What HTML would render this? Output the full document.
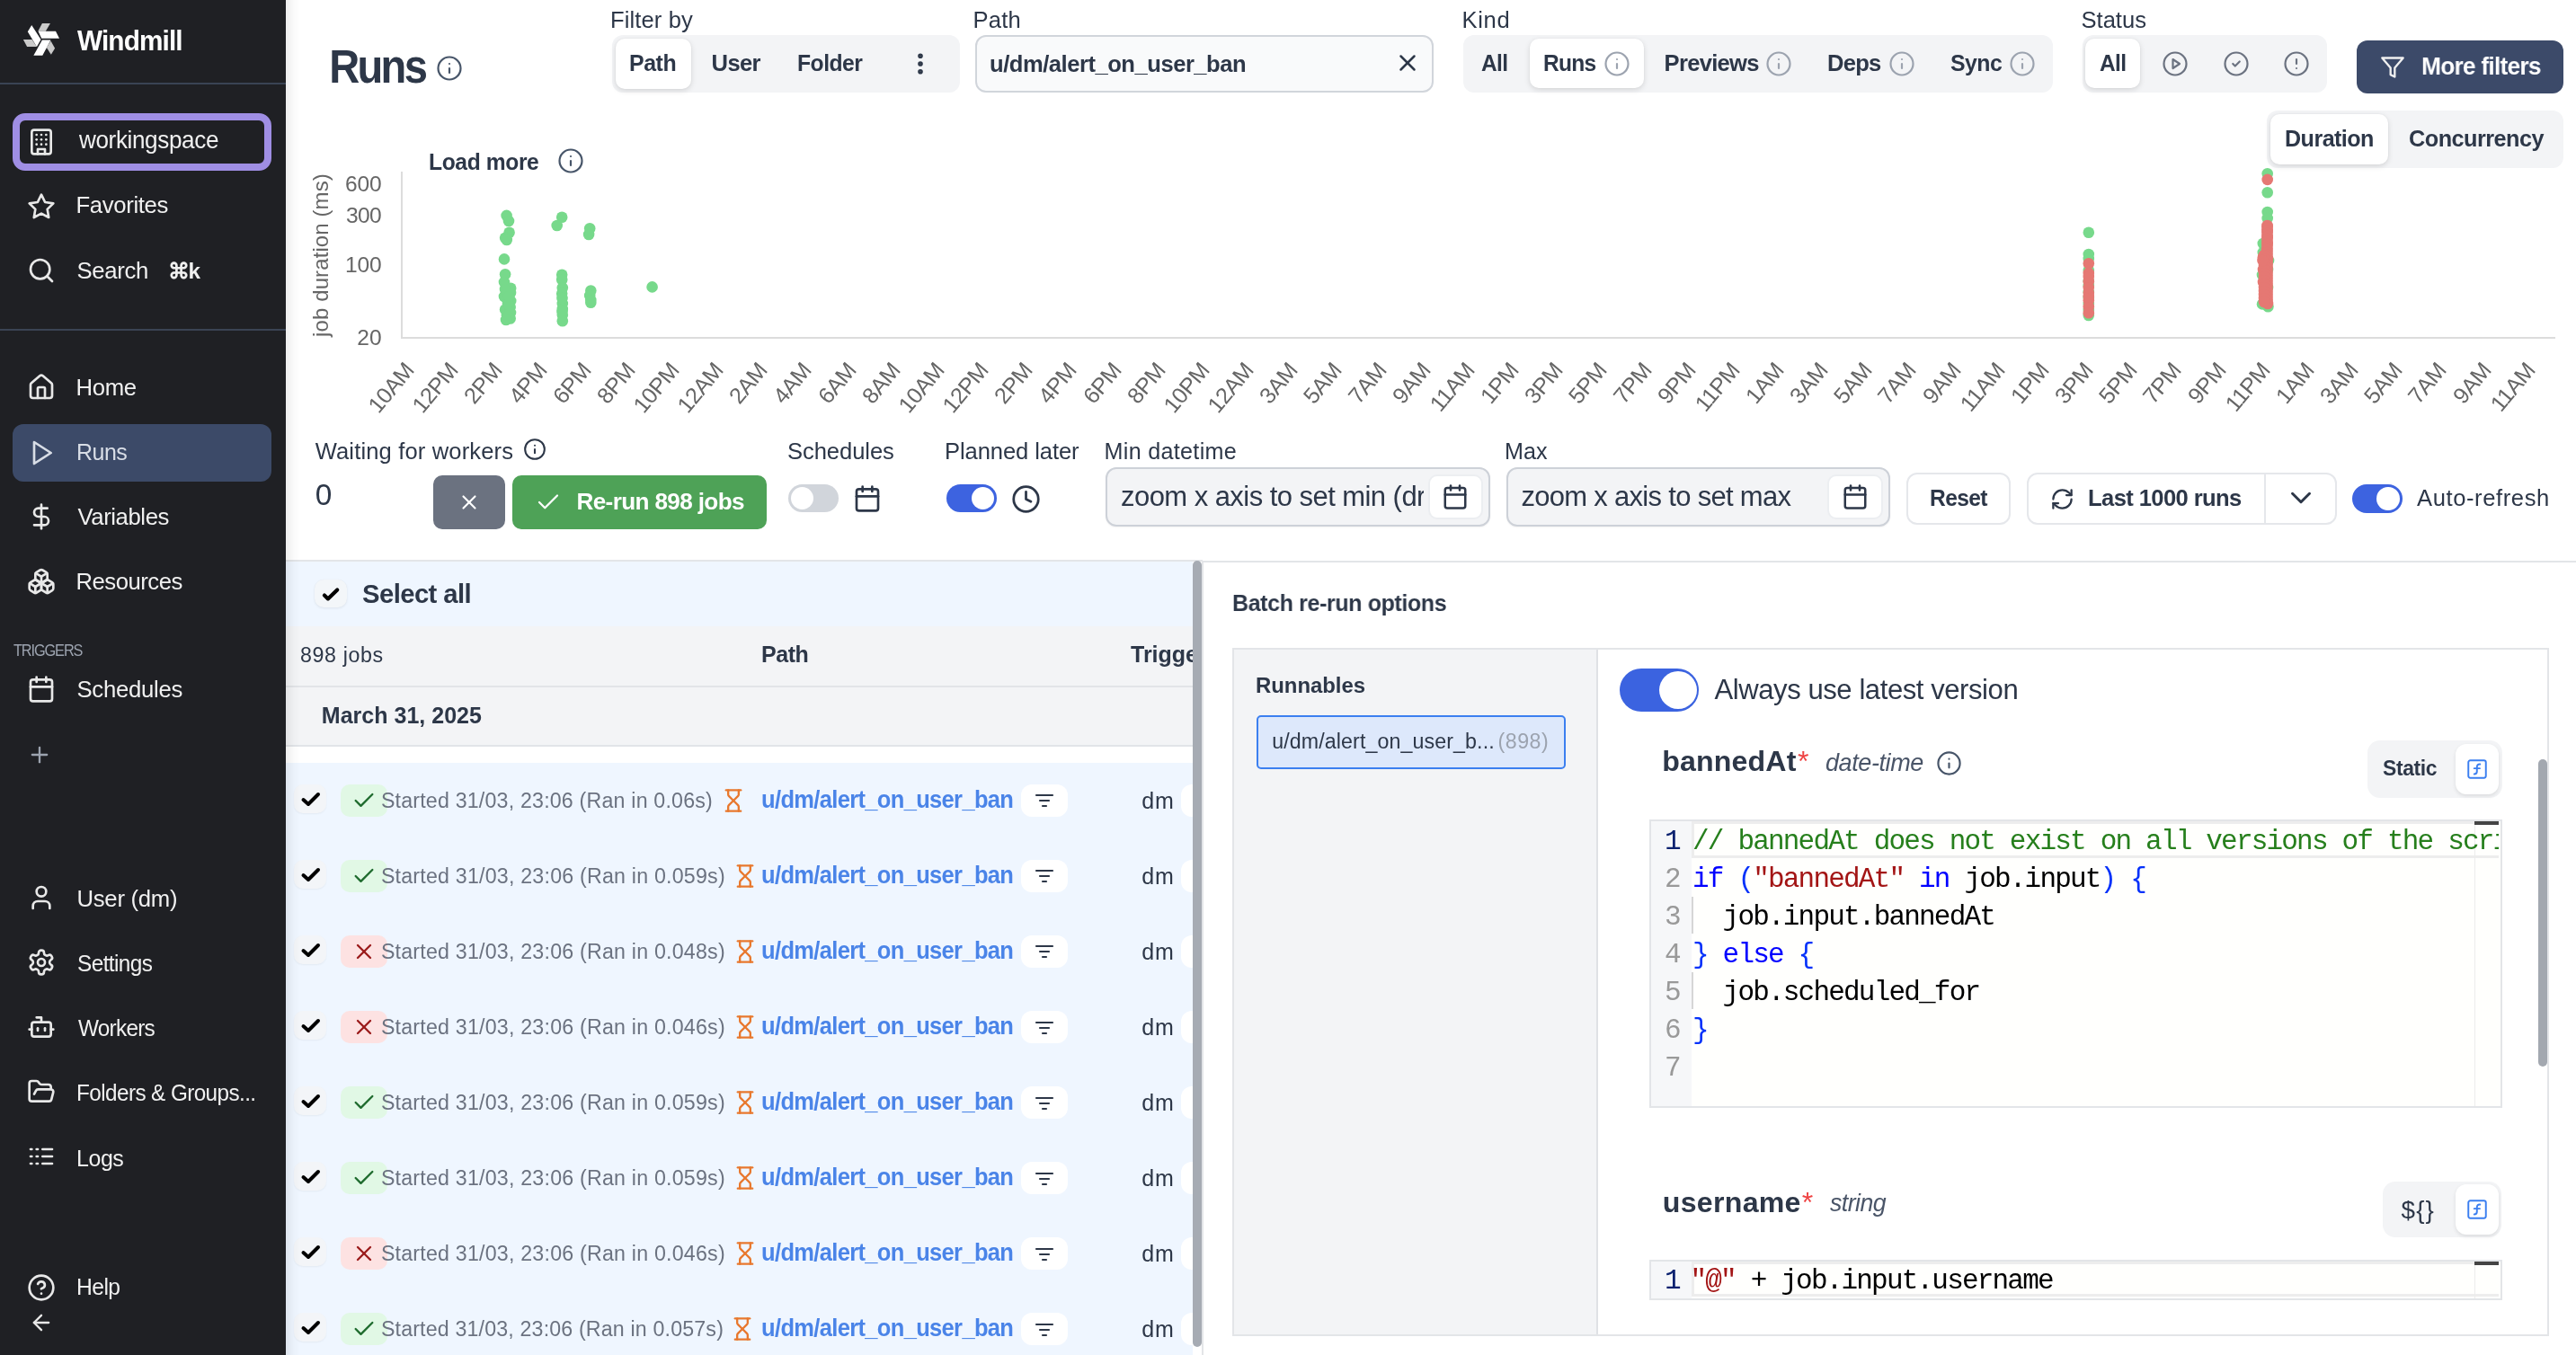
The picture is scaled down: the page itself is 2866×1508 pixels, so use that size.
<!DOCTYPE html>
<html><head><meta charset="utf-8"><style>
html,body{margin:0;padding:0;width:2866px;height:1508px;overflow:hidden;background:#fff;}
*{box-sizing:border-box;}
</style></head><body>
<div style="position:absolute;left:0;top:0;width:2866px;height:1508px;will-change:transform;">
<div style="position:absolute;left:0px;top:0px;width:318px;height:1508px;background:#1f2024;"></div>
<svg style="position:absolute;left:20px;top:20px" width="52" height="48" viewBox="0 0 1468 1355">
<polygon points="760,170 1015,170 870,415 630,415" fill="#cacaca"/>
<polygon points="165,680 440,680 590,905 285,905" fill="#cacaca"/>
<polygon points="1030,720 1160,950 1040,1150 900,930" fill="#cacaca"/>
<polygon points="430,225 720,680 590,905 305,430" fill="#ffffff"/>
<polygon points="635,415 1185,415 1300,640 740,640" fill="#ffffff"/>
<polygon points="760,690 1030,690 770,1180 490,1180" fill="#ffffff"/>
</svg>
<div style="position:absolute;left:86.0px;letter-spacing:-0.92px;transform:scaleX(0.9473);transform-origin:0.0px 0;top:29.8px;font: 700 31.43px/1 'Liberation Sans', sans-serif;color:#ffffff;white-space:pre;">Windmill</div>
<div style="position:absolute;left:0px;top:92px;width:318px;height:2px;background:#3a4354;"></div>
<div style="position:absolute;left:14px;top:126px;width:288px;height:64px;border:8px solid #9f8ee4;border-radius:14px;background:#1f2024;"></div>
<svg style="position:absolute;left:30.0px;top:141.5px" width="32" height="32" viewBox="0 0 24 24" fill="none" stroke="#e8e8e8" stroke-width="2" stroke-linecap="round" stroke-linejoin="round" ><rect width="16" height="20" x="4" y="2" rx="2" ry="2"/><path d="M9 22v-4h6v4"/><path d="M8 6h.01"/><path d="M16 6h.01"/><path d="M12 6h.01"/><path d="M12 10h.01"/><path d="M12 14h.01"/><path d="M16 10h.01"/><path d="M16 14h.01"/><path d="M8 10h.01"/><path d="M8 14h.01"/></svg>
<div style="position:absolute;left:87.5px;letter-spacing:-0.40px;transform:scaleX(0.9725);transform-origin:-1.0px 0;top:143.4px;font: 400 26.86px/1 'Liberation Sans', sans-serif;color:#f0f0f0;white-space:pre;">workingspace</div>
<svg style="position:absolute;left:29.7px;top:213.5px" width="32" height="32" viewBox="0 0 24 24" fill="none" stroke="#e8e8e8" stroke-width="2" stroke-linecap="round" stroke-linejoin="round" ><polygon points="12 2 15.09 8.26 22 9.27 17 14.14 18.18 21.02 12 17.77 5.82 21.02 7 14.14 2 9.27 8.91 8.26 12 2"/></svg>
<div style="position:absolute;left:84.5px;letter-spacing:-0.36px;top:216.3px;font: 400 25.71px/1 'Liberation Sans', sans-serif;color:#f0f0f0;white-space:pre;">Favorites</div>
<svg style="position:absolute;left:29.7px;top:285.0px" width="32" height="32" viewBox="0 0 24 24" fill="none" stroke="#e8e8e8" stroke-width="2" stroke-linecap="round" stroke-linejoin="round" ><circle cx="11" cy="11" r="8"/><path d="m21 21-4.3-4.3"/></svg>
<div style="position:absolute;left:85.5px;letter-spacing:-0.35px;top:288.6px;font: 400 25.71px/1 'Liberation Sans', sans-serif;color:#f0f0f0;white-space:pre;">Search</div>
<div style="position:absolute;left:186.5px;letter-spacing:-1.00px;top:290.4px;font: 700 24.29px/1 'Liberation Sans', sans-serif;color:#f0f0f0;white-space:pre;">⌘k</div>
<div style="position:absolute;left:0px;top:366px;width:318px;height:2px;background:#3a4354;"></div>
<div style="position:absolute;left:14px;top:472px;width:288px;height:64px;background:#3c4a68;border-radius:12px;"></div>
<svg style="position:absolute;left:29.7px;top:415.0px" width="32" height="32" viewBox="0 0 24 24" fill="none" stroke="#e8e8e8" stroke-width="2" stroke-linecap="round" stroke-linejoin="round" ><path d="M15 21v-8a1 1 0 0 0-1-1h-4a1 1 0 0 0-1 1v8"/><path d="M3 10a2 2 0 0 1 .709-1.528l7-5.999a2 2 0 0 1 2.582 0l7 5.999A2 2 0 0 1 21 10v9a2 2 0 0 1-2 2H5a2 2 0 0 1-2-2z"/></svg>
<div style="position:absolute;left:84.5px;letter-spacing:-0.32px;top:419.2px;font: 400 25.71px/1 'Liberation Sans', sans-serif;color:#f0f0f0;white-space:pre;">Home</div>
<svg style="position:absolute;left:29.7px;top:487.5px" width="32" height="32" viewBox="0 0 24 24" fill="none" stroke="#d8dde6" stroke-width="2" stroke-linecap="round" stroke-linejoin="round" ><polygon points="6 3 20 12 6 21 6 3"/></svg>
<div style="position:absolute;left:84.5px;letter-spacing:-0.53px;transform:scaleX(0.9716);transform-origin:2.0px 0;top:491.1px;font: 400 25.71px/1 'Liberation Sans', sans-serif;color:#d8dde6;white-space:pre;">Runs</div>
<svg style="position:absolute;left:29.7px;top:559.0px" width="32" height="32" viewBox="0 0 24 24" fill="none" stroke="#e8e8e8" stroke-width="2" stroke-linecap="round" stroke-linejoin="round" ><line x1="12" x2="12" y1="2" y2="22"/><path d="M17 5H9.5a3.5 3.5 0 0 0 0 7h5a3.5 3.5 0 0 1 0 7H6"/></svg>
<div style="position:absolute;left:86.5px;letter-spacing:-0.42px;top:562.6px;font: 400 25.71px/1 'Liberation Sans', sans-serif;color:#f0f0f0;white-space:pre;">Variables</div>
<svg style="position:absolute;left:29.7px;top:631.0px" width="32" height="32" viewBox="0 0 24 24" fill="none" stroke="#e8e8e8" stroke-width="2" stroke-linecap="round" stroke-linejoin="round" ><path d="M2.97 12.92A2 2 0 0 0 2 14.63v3.24a2 2 0 0 0 .97 1.71l3 1.8a2 2 0 0 0 2.06 0L12 19v-5.5l-5-3-4.03 2.42Z"/><path d="m7 16.5-4.74-2.85"/><path d="m7 16.5 5-3"/><path d="M7 16.5v5.17"/><path d="M12 13.5V19l3.97 2.38a2 2 0 0 0 2.06 0l3-1.8a2 2 0 0 0 .97-1.71v-3.24a2 2 0 0 0-.97-1.71L17 10.5l-5 3Z"/><path d="m17 16.5-5-3"/><path d="m17 16.5 4.74-2.85"/><path d="M17 16.5v5.17"/><path d="M7.97 4.42A2 2 0 0 0 7 6.13v4.37l5 3 5-3V6.13a2 2 0 0 0-.97-1.71l-3-1.8a2 2 0 0 0-2.06 0l-3 1.8Z"/><path d="M12 8 7.26 5.15"/><path d="m12 8 4.74-2.85"/><path d="M12 13.5V8"/></svg>
<div style="position:absolute;left:84.5px;letter-spacing:-0.50px;top:634.6px;font: 400 25.71px/1 'Liberation Sans', sans-serif;color:#f0f0f0;white-space:pre;">Resources</div>
<div style="position:absolute;left:14.6px;letter-spacing:-1.23px;transform:scaleX(0.9001);transform-origin:0.0px 0;top:714.9px;font: 400 18.14px/1 'Liberation Sans', sans-serif;color:#9ca3af;white-space:pre;">TRIGGERS</div>
<svg style="position:absolute;left:29.7px;top:751.0px" width="32" height="32" viewBox="0 0 24 24" fill="none" stroke="#e8e8e8" stroke-width="2" stroke-linecap="round" stroke-linejoin="round" ><rect width="18" height="18" x="3" y="4" rx="2" ry="2"/><line x1="16" x2="16" y1="2" y2="6"/><line x1="8" x2="8" y1="2" y2="6"/><line x1="3" x2="21" y1="10" y2="10"/></svg>
<div style="position:absolute;left:85.5px;letter-spacing:-0.27px;top:754.6px;font: 400 25.71px/1 'Liberation Sans', sans-serif;color:#f0f0f0;white-space:pre;">Schedules</div>
<svg style="position:absolute;left:30.0px;top:826.0px" width="28" height="28" viewBox="0 0 24 24" fill="none" stroke="#9ca3af" stroke-width="2" stroke-linecap="round" stroke-linejoin="round" ><path d="M5 12h14"/><path d="M12 5v14"/></svg>
<svg style="position:absolute;left:29.7px;top:983.0px" width="32" height="32" viewBox="0 0 24 24" fill="none" stroke="#e8e8e8" stroke-width="2" stroke-linecap="round" stroke-linejoin="round" ><path d="M19 21v-2a4 4 0 0 0-4-4H9a4 4 0 0 0-4 4v2"/><circle cx="12" cy="7" r="4"/></svg>
<div style="position:absolute;left:85.5px;letter-spacing:-0.27px;top:987.6px;font: 400 25.71px/1 'Liberation Sans', sans-serif;color:#f0f0f0;white-space:pre;">User (dm)</div>
<svg style="position:absolute;left:29.7px;top:1055.0px" width="32" height="32" viewBox="0 0 24 24" fill="none" stroke="#e8e8e8" stroke-width="2" stroke-linecap="round" stroke-linejoin="round" ><path d="M12.22 2h-.44a2 2 0 0 0-2 2v.18a2 2 0 0 1-1 1.73l-.43.25a2 2 0 0 1-2 0l-.15-.08a2 2 0 0 0-2.73.73l-.22.38a2 2 0 0 0 .73 2.73l.15.1a2 2 0 0 1 1 1.72v.51a2 2 0 0 1-1 1.74l-.15.09a2 2 0 0 0-.73 2.73l.22.38a2 2 0 0 0 2.73.73l.15-.08a2 2 0 0 1 2 0l.43.25a2 2 0 0 1 1 1.73V20a2 2 0 0 0 2 2h.44a2 2 0 0 0 2-2v-.18a2 2 0 0 1 1-1.73l.43-.25a2 2 0 0 1 2 0l.15.08a2 2 0 0 0 2.73-.73l.22-.39a2 2 0 0 0-.73-2.73l-.15-.08a2 2 0 0 1-1-1.74v-.5a2 2 0 0 1 1-1.74l.15-.09a2 2 0 0 0 .73-2.73l-.22-.38a2 2 0 0 0-2.73-.73l-.15.08a2 2 0 0 1-2 0l-.43-.25a2 2 0 0 1-1-1.73V4a2 2 0 0 0-2-2z"/><circle cx="12" cy="12" r="3"/></svg>
<div style="position:absolute;left:85.5px;letter-spacing:-0.64px;transform:scaleX(0.9479);transform-origin:1.0px 0;top:1059.9px;font: 400 25.71px/1 'Liberation Sans', sans-serif;color:#f0f0f0;white-space:pre;">Settings</div>
<svg style="position:absolute;left:29.7px;top:1127.0px" width="32" height="32" viewBox="0 0 24 24" fill="none" stroke="#e8e8e8" stroke-width="2" stroke-linecap="round" stroke-linejoin="round" ><path d="M12 8V4H8"/><rect width="16" height="12" x="4" y="8" rx="2"/><path d="M2 14h2"/><path d="M20 14h2"/><path d="M15 13v2"/><path d="M9 13v2"/></svg>
<div style="position:absolute;left:86.5px;letter-spacing:-0.78px;transform:scaleX(0.9478);transform-origin:0.0px 0;top:1132.2px;font: 400 25.71px/1 'Liberation Sans', sans-serif;color:#f0f0f0;white-space:pre;">Workers</div>
<svg style="position:absolute;left:29.7px;top:1199.0px" width="32" height="32" viewBox="0 0 24 24" fill="none" stroke="#e8e8e8" stroke-width="2" stroke-linecap="round" stroke-linejoin="round" ><path d="m6 14 1.5-2.9A2 2 0 0 1 9.24 10H20a2 2 0 0 1 1.94 2.5l-1.54 6a2 2 0 0 1-1.95 1.5H4a2 2 0 0 1-2-2V5a2 2 0 0 1 2-2h3.9a2 2 0 0 1 1.69.9l.81 1.2a2 2 0 0 0 1.67.9H18a2 2 0 0 1 2 2v2"/></svg>
<div style="position:absolute;left:84.5px;letter-spacing:-0.63px;transform:scaleX(0.9453);transform-origin:2.0px 0;top:1204.0px;font: 400 25.71px/1 'Liberation Sans', sans-serif;color:#f0f0f0;white-space:pre;">Folders &amp; Groups...</div>
<svg style="position:absolute;left:29.7px;top:1271.0px" width="32" height="32" viewBox="0 0 24 24" fill="none" stroke="#e8e8e8" stroke-width="2" stroke-linecap="round" stroke-linejoin="round" ><path d="M13 12h8"/><path d="M13 18h8"/><path d="M13 6h8"/><path d="M3 12h1"/><path d="M3 18h1"/><path d="M3 6h1"/><path d="M8 12h1"/><path d="M8 18h1"/><path d="M8 6h1"/></svg>
<div style="position:absolute;left:84.5px;letter-spacing:-0.48px;transform:scaleX(0.9720);transform-origin:2.0px 0;top:1277.2px;font: 400 25.71px/1 'Liberation Sans', sans-serif;color:#f0f0f0;white-space:pre;">Logs</div>
<svg style="position:absolute;left:29.7px;top:1417.0px" width="32" height="32" viewBox="0 0 24 24" fill="none" stroke="#e8e8e8" stroke-width="2" stroke-linecap="round" stroke-linejoin="round" ><circle cx="12" cy="12" r="10"/><path d="M9.09 9a3 3 0 0 1 5.83 1c0 2-3 3-3 3"/><path d="M12 17h.01"/></svg>
<div style="position:absolute;left:84.5px;letter-spacing:-0.64px;transform:scaleX(0.9602);transform-origin:2.0px 0;top:1420.3px;font: 400 25.71px/1 'Liberation Sans', sans-serif;color:#f0f0f0;white-space:pre;">Help</div>
<svg style="position:absolute;left:31.7px;top:1458.0px" width="28" height="28" viewBox="0 0 24 24" fill="none" stroke="#e8e8e8" stroke-width="2" stroke-linecap="round" stroke-linejoin="round" ><path d="m12 19-7-7 7-7"/><path d="M19 12H5"/></svg>
<div style="position:absolute;left:365.6px;letter-spacing:-2.92px;transform:scaleX(0.9233);transform-origin:3.0px 0;top:48.9px;font: 700 51.00px/1 'Liberation Sans', sans-serif;color:#2d3748;white-space:pre;">Runs</div>
<svg style="position:absolute;left:485.0px;top:61.0px" width="30" height="30" viewBox="0 0 24 24" fill="none" stroke="#475569" stroke-width="1.75" stroke-linecap="round" stroke-linejoin="round" ><circle cx="12" cy="12" r="10"/><path d="M12 16v-4"/><path d="M12 8h.01"/></svg>
<div style="position:absolute;left:679.0px;letter-spacing:0.11px;top:9.7px;font: 400 25.57px/1 'Liberation Sans', sans-serif;color:#2d3748;white-space:pre;">Filter by</div>
<div style="position:absolute;left:681px;top:39px;width:387px;height:64px;background:#f3f4f6;border-radius:12px;"></div>
<div style="position:absolute;left:685px;top:43px;width:84px;height:56px;background:#fff;border-radius:10px;box-shadow:0 2px 6px rgba(0,0,0,0.13), 0 0 2px rgba(0,0,0,0.05);"></div>
<div style="position:absolute;left:700.0px;letter-spacing:-0.46px;transform:scaleX(0.9735);transform-origin:1.0px 0;top:57.9px;font: 700 25.57px/1 'Liberation Sans', sans-serif;color:#2d3748;white-space:pre;">Path</div>
<div style="position:absolute;left:791.6px;letter-spacing:-0.63px;top:57.9px;font: 700 25.57px/1 'Liberation Sans', sans-serif;color:#2d3748;white-space:pre;">User</div>
<div style="position:absolute;left:886.7px;letter-spacing:-0.52px;transform:scaleX(0.9654);transform-origin:1.0px 0;top:57.9px;font: 700 25.57px/1 'Liberation Sans', sans-serif;color:#2d3748;white-space:pre;">Folder</div>
<svg style="position:absolute;left:1008.5px;top:56.0px" width="30" height="30" viewBox="0 0 24 24" fill="none" stroke="#2d3748" stroke-width="2.5" stroke-linecap="round" stroke-linejoin="round" ><circle cx="12" cy="12" r="1"/><circle cx="12" cy="5" r="1"/><circle cx="12" cy="19" r="1"/></svg>
<div style="position:absolute;left:1082.5px;letter-spacing:0.21px;top:9.7px;font: 400 25.57px/1 'Liberation Sans', sans-serif;color:#2d3748;white-space:pre;">Path</div>
<div style="position:absolute;left:1084.5px;top:39px;width:510.5px;height:63.5px;background:#f9fafb;border:2px solid #d1d5db;border-radius:12px;"></div>
<div style="position:absolute;left:1101.0px;letter-spacing:-0.47px;top:58.8px;font: 700 25.57px/1 'Liberation Sans', sans-serif;color:#2d3748;white-space:pre;">u/dm/alert_on_user_ban</div>
<svg style="position:absolute;left:1551.0px;top:55.0px" width="30" height="30" viewBox="0 0 24 24" fill="none" stroke="#2d3748" stroke-width="2" stroke-linecap="round" stroke-linejoin="round" ><path d="M18 6 6 18"/><path d="m6 6 12 12"/></svg>
<div style="position:absolute;left:1626.5px;letter-spacing:0.68px;top:9.7px;font: 400 25.57px/1 'Liberation Sans', sans-serif;color:#2d3748;white-space:pre;">Kind</div>
<div style="position:absolute;left:1628px;top:39px;width:656px;height:63.7px;background:#f3f4f6;border-radius:12px;"></div>
<div style="position:absolute;left:1702px;top:43px;width:126.5px;height:55px;background:#fff;border-radius:10px;box-shadow:0 2px 6px rgba(0,0,0,0.13), 0 0 2px rgba(0,0,0,0.05);"></div>
<div style="position:absolute;left:1648.0px;letter-spacing:-0.64px;transform:scaleX(0.9577);transform-origin:0.0px 0;top:57.9px;font: 700 25.57px/1 'Liberation Sans', sans-serif;color:#2d3748;white-space:pre;">All</div>
<div style="position:absolute;left:1717.0px;letter-spacing:-0.78px;transform:scaleX(0.9611);transform-origin:1.0px 0;top:57.9px;font: 700 25.57px/1 'Liberation Sans', sans-serif;color:#2d3748;white-space:pre;">Runs</div>
<svg style="position:absolute;left:1783.5px;top:55.8px" width="30" height="30" viewBox="0 0 24 24" fill="none" stroke="#9ca3af" stroke-width="1.75" stroke-linecap="round" stroke-linejoin="round" ><circle cx="12" cy="12" r="10"/><path d="M12 16v-4"/><path d="M12 8h.01"/></svg>
<div style="position:absolute;left:1851.6px;letter-spacing:-0.72px;top:57.9px;font: 700 25.57px/1 'Liberation Sans', sans-serif;color:#2d3748;white-space:pre;">Previews</div>
<svg style="position:absolute;left:1964.0px;top:55.8px" width="30" height="30" viewBox="0 0 24 24" fill="none" stroke="#9ca3af" stroke-width="1.75" stroke-linecap="round" stroke-linejoin="round" ><circle cx="12" cy="12" r="10"/><path d="M12 16v-4"/><path d="M12 8h.01"/></svg>
<div style="position:absolute;left:2033.0px;letter-spacing:-0.76px;top:57.9px;font: 700 25.57px/1 'Liberation Sans', sans-serif;color:#2d3748;white-space:pre;">Deps</div>
<svg style="position:absolute;left:2100.5px;top:55.8px" width="30" height="30" viewBox="0 0 24 24" fill="none" stroke="#9ca3af" stroke-width="1.75" stroke-linecap="round" stroke-linejoin="round" ><circle cx="12" cy="12" r="10"/><path d="M12 16v-4"/><path d="M12 8h.01"/></svg>
<div style="position:absolute;left:2170.0px;letter-spacing:-0.56px;transform:scaleX(0.9714);transform-origin:0.0px 0;top:57.9px;font: 700 25.57px/1 'Liberation Sans', sans-serif;color:#2d3748;white-space:pre;">Sync</div>
<svg style="position:absolute;left:2234.7px;top:55.8px" width="30" height="30" viewBox="0 0 24 24" fill="none" stroke="#9ca3af" stroke-width="1.75" stroke-linecap="round" stroke-linejoin="round" ><circle cx="12" cy="12" r="10"/><path d="M12 16v-4"/><path d="M12 8h.01"/></svg>
<div style="position:absolute;left:2315.5px;letter-spacing:0.00px;top:9.7px;font: 400 25.57px/1 'Liberation Sans', sans-serif;color:#2d3748;white-space:pre;">Status</div>
<div style="position:absolute;left:2316.5px;top:39px;width:272.5px;height:63.7px;background:#f3f4f6;border-radius:12px;"></div>
<div style="position:absolute;left:2320px;top:43px;width:61px;height:55px;background:#fff;border-radius:10px;box-shadow:0 2px 6px rgba(0,0,0,0.13), 0 0 2px rgba(0,0,0,0.05);"></div>
<div style="position:absolute;left:2336.0px;letter-spacing:-0.64px;transform:scaleX(0.9577);transform-origin:0.0px 0;top:57.9px;font: 700 25.57px/1 'Liberation Sans', sans-serif;color:#2d3748;white-space:pre;">All</div>
<svg style="position:absolute;left:2404.7px;top:55.8px" width="30" height="30" viewBox="0 0 24 24" fill="none" stroke="#6b7280" stroke-width="1.75" stroke-linecap="round" stroke-linejoin="round" ><circle cx="12" cy="12" r="10"/><polygon points="10 8 16 12 10 16 10 8"/></svg>
<svg style="position:absolute;left:2472.5px;top:55.8px" width="30" height="30" viewBox="0 0 24 24" fill="none" stroke="#6b7280" stroke-width="1.75" stroke-linecap="round" stroke-linejoin="round" ><circle cx="12" cy="12" r="10"/><path d="m9 12 2 2 4-4"/></svg>
<svg style="position:absolute;left:2540.0px;top:55.8px" width="30" height="30" viewBox="0 0 24 24" fill="none" stroke="#6b7280" stroke-width="1.75" stroke-linecap="round" stroke-linejoin="round" ><circle cx="12" cy="12" r="10"/><line x1="12" x2="12" y1="8" y2="12"/><line x1="12" x2="12.01" y1="16" y2="16"/></svg>
<div style="position:absolute;left:2622px;top:45px;width:229.6px;height:59px;background:#3c4a69;border-radius:12px;"></div>
<svg style="position:absolute;left:2648.0px;top:61.0px" width="28" height="28" viewBox="0 0 24 24" fill="none" stroke="#f0f0f0" stroke-width="2" stroke-linecap="round" stroke-linejoin="round" ><polygon points="22 3 2 3 10 12.46 10 19 14 21 14 12.46 22 3"/></svg>
<div style="position:absolute;left:2694.0px;letter-spacing:-0.76px;transform:scaleX(0.9406);transform-origin:1.0px 0;top:60.3px;font: 700 27.86px/1 'Liberation Sans', sans-serif;color:#ffffff;white-space:pre;">More filters</div>
<div style="position:absolute;left:2522px;top:123px;width:329.6px;height:63.5px;background:#f3f4f6;border-radius:12px;"></div>
<div style="position:absolute;left:2526px;top:127px;width:131px;height:55.7px;background:#fff;border-radius:10px;box-shadow:0 2px 6px rgba(0,0,0,0.13), 0 0 2px rgba(0,0,0,0.05);"></div>
<div style="position:absolute;left:2541.5px;letter-spacing:-0.57px;transform:scaleX(0.9609);transform-origin:1.0px 0;top:141.1px;font: 700 26.14px/1 'Liberation Sans', sans-serif;color:#2d3748;white-space:pre;">Duration</div>
<div style="position:absolute;left:2680.0px;letter-spacing:-0.53px;transform:scaleX(0.9658);transform-origin:1.0px 0;top:141.1px;font: 700 26.14px/1 'Liberation Sans', sans-serif;color:#2d3748;white-space:pre;">Concurrency</div>
<div style="position:absolute;left:477.3px;letter-spacing:-0.40px;transform:scaleX(0.9741);transform-origin:1.0px 0;top:167.5px;font: 700 25.29px/1 'Liberation Sans', sans-serif;color:#2d3748;white-space:pre;">Load more</div>
<svg style="position:absolute;left:620.0px;top:164.4px" width="30" height="30" viewBox="0 0 24 24" fill="none" stroke="#475569" stroke-width="1.75" stroke-linecap="round" stroke-linejoin="round" ><circle cx="12" cy="12" r="10"/><path d="M12 16v-4"/><path d="M12 8h.01"/></svg>
<div style="position:absolute;left:446px;top:191px;width:2px;height:185px;background:#dcdcdc;"></div>
<div style="position:absolute;left:446px;top:374.6px;width:2397px;height:2px;background:#dcdcdc;"></div>
<div style="position:absolute;left:384.0px;letter-spacing:-0.16px;top:193.3px;font: 400 24.57px/1 'Liberation Sans', sans-serif;color:#666666;white-space:pre;">600</div>
<div style="position:absolute;left:385.0px;letter-spacing:-0.66px;top:228.3px;font: 400 24.57px/1 'Liberation Sans', sans-serif;color:#666666;white-space:pre;">300</div>
<div style="position:absolute;left:384.0px;letter-spacing:-0.16px;top:283.3px;font: 400 24.57px/1 'Liberation Sans', sans-serif;color:#666666;white-space:pre;">100</div>
<div style="position:absolute;left:397.3px;letter-spacing:0.04px;top:364.3px;font: 400 24.57px/1 'Liberation Sans', sans-serif;color:#666666;white-space:pre;">20</div>
<div style="position:absolute;left:257px;top:271px;width:200px;height:26px;transform:rotate(-90deg);transform-origin:center;font:400 24px/26px 'Liberation Sans',sans-serif;letter-spacing:0.1px;color:#666;text-align:center;white-space:nowrap;">job duration (ms)</div>
<div style="position:absolute;left:315.0px;top:391.5px;width:140px;height:30px;text-align:right;transform:rotate(-50deg);transform-origin:100% 50%;font:400 25px/30px 'Liberation Sans',sans-serif;letter-spacing:-0.5px;color:#666;white-space:nowrap;">10AM</div>
<div style="position:absolute;left:364.2px;top:391.5px;width:140px;height:30px;text-align:right;transform:rotate(-50deg);transform-origin:100% 50%;font:400 25px/30px 'Liberation Sans',sans-serif;letter-spacing:-0.5px;color:#666;white-space:nowrap;">12PM</div>
<div style="position:absolute;left:413.3px;top:391.5px;width:140px;height:30px;text-align:right;transform:rotate(-50deg);transform-origin:100% 50%;font:400 25px/30px 'Liberation Sans',sans-serif;letter-spacing:-0.5px;color:#666;white-space:nowrap;">2PM</div>
<div style="position:absolute;left:462.5px;top:391.5px;width:140px;height:30px;text-align:right;transform:rotate(-50deg);transform-origin:100% 50%;font:400 25px/30px 'Liberation Sans',sans-serif;letter-spacing:-0.5px;color:#666;white-space:nowrap;">4PM</div>
<div style="position:absolute;left:511.6px;top:391.5px;width:140px;height:30px;text-align:right;transform:rotate(-50deg);transform-origin:100% 50%;font:400 25px/30px 'Liberation Sans',sans-serif;letter-spacing:-0.5px;color:#666;white-space:nowrap;">6PM</div>
<div style="position:absolute;left:560.8px;top:391.5px;width:140px;height:30px;text-align:right;transform:rotate(-50deg);transform-origin:100% 50%;font:400 25px/30px 'Liberation Sans',sans-serif;letter-spacing:-0.5px;color:#666;white-space:nowrap;">8PM</div>
<div style="position:absolute;left:610.0px;top:391.5px;width:140px;height:30px;text-align:right;transform:rotate(-50deg);transform-origin:100% 50%;font:400 25px/30px 'Liberation Sans',sans-serif;letter-spacing:-0.5px;color:#666;white-space:nowrap;">10PM</div>
<div style="position:absolute;left:659.1px;top:391.5px;width:140px;height:30px;text-align:right;transform:rotate(-50deg);transform-origin:100% 50%;font:400 25px/30px 'Liberation Sans',sans-serif;letter-spacing:-0.5px;color:#666;white-space:nowrap;">12AM</div>
<div style="position:absolute;left:708.3px;top:391.5px;width:140px;height:30px;text-align:right;transform:rotate(-50deg);transform-origin:100% 50%;font:400 25px/30px 'Liberation Sans',sans-serif;letter-spacing:-0.5px;color:#666;white-space:nowrap;">2AM</div>
<div style="position:absolute;left:757.4px;top:391.5px;width:140px;height:30px;text-align:right;transform:rotate(-50deg);transform-origin:100% 50%;font:400 25px/30px 'Liberation Sans',sans-serif;letter-spacing:-0.5px;color:#666;white-space:nowrap;">4AM</div>
<div style="position:absolute;left:806.6px;top:391.5px;width:140px;height:30px;text-align:right;transform:rotate(-50deg);transform-origin:100% 50%;font:400 25px/30px 'Liberation Sans',sans-serif;letter-spacing:-0.5px;color:#666;white-space:nowrap;">6AM</div>
<div style="position:absolute;left:855.8px;top:391.5px;width:140px;height:30px;text-align:right;transform:rotate(-50deg);transform-origin:100% 50%;font:400 25px/30px 'Liberation Sans',sans-serif;letter-spacing:-0.5px;color:#666;white-space:nowrap;">8AM</div>
<div style="position:absolute;left:904.9px;top:391.5px;width:140px;height:30px;text-align:right;transform:rotate(-50deg);transform-origin:100% 50%;font:400 25px/30px 'Liberation Sans',sans-serif;letter-spacing:-0.5px;color:#666;white-space:nowrap;">10AM</div>
<div style="position:absolute;left:954.1px;top:391.5px;width:140px;height:30px;text-align:right;transform:rotate(-50deg);transform-origin:100% 50%;font:400 25px/30px 'Liberation Sans',sans-serif;letter-spacing:-0.5px;color:#666;white-space:nowrap;">12PM</div>
<div style="position:absolute;left:1003.2px;top:391.5px;width:140px;height:30px;text-align:right;transform:rotate(-50deg);transform-origin:100% 50%;font:400 25px/30px 'Liberation Sans',sans-serif;letter-spacing:-0.5px;color:#666;white-space:nowrap;">2PM</div>
<div style="position:absolute;left:1052.4px;top:391.5px;width:140px;height:30px;text-align:right;transform:rotate(-50deg);transform-origin:100% 50%;font:400 25px/30px 'Liberation Sans',sans-serif;letter-spacing:-0.5px;color:#666;white-space:nowrap;">4PM</div>
<div style="position:absolute;left:1101.6px;top:391.5px;width:140px;height:30px;text-align:right;transform:rotate(-50deg);transform-origin:100% 50%;font:400 25px/30px 'Liberation Sans',sans-serif;letter-spacing:-0.5px;color:#666;white-space:nowrap;">6PM</div>
<div style="position:absolute;left:1150.7px;top:391.5px;width:140px;height:30px;text-align:right;transform:rotate(-50deg);transform-origin:100% 50%;font:400 25px/30px 'Liberation Sans',sans-serif;letter-spacing:-0.5px;color:#666;white-space:nowrap;">8PM</div>
<div style="position:absolute;left:1199.9px;top:391.5px;width:140px;height:30px;text-align:right;transform:rotate(-50deg);transform-origin:100% 50%;font:400 25px/30px 'Liberation Sans',sans-serif;letter-spacing:-0.5px;color:#666;white-space:nowrap;">10PM</div>
<div style="position:absolute;left:1249.0px;top:391.5px;width:140px;height:30px;text-align:right;transform:rotate(-50deg);transform-origin:100% 50%;font:400 25px/30px 'Liberation Sans',sans-serif;letter-spacing:-0.5px;color:#666;white-space:nowrap;">12AM</div>
<div style="position:absolute;left:1298.2px;top:391.5px;width:140px;height:30px;text-align:right;transform:rotate(-50deg);transform-origin:100% 50%;font:400 25px/30px 'Liberation Sans',sans-serif;letter-spacing:-0.5px;color:#666;white-space:nowrap;">3AM</div>
<div style="position:absolute;left:1347.4px;top:391.5px;width:140px;height:30px;text-align:right;transform:rotate(-50deg);transform-origin:100% 50%;font:400 25px/30px 'Liberation Sans',sans-serif;letter-spacing:-0.5px;color:#666;white-space:nowrap;">5AM</div>
<div style="position:absolute;left:1396.5px;top:391.5px;width:140px;height:30px;text-align:right;transform:rotate(-50deg);transform-origin:100% 50%;font:400 25px/30px 'Liberation Sans',sans-serif;letter-spacing:-0.5px;color:#666;white-space:nowrap;">7AM</div>
<div style="position:absolute;left:1445.7px;top:391.5px;width:140px;height:30px;text-align:right;transform:rotate(-50deg);transform-origin:100% 50%;font:400 25px/30px 'Liberation Sans',sans-serif;letter-spacing:-0.5px;color:#666;white-space:nowrap;">9AM</div>
<div style="position:absolute;left:1494.8px;top:391.5px;width:140px;height:30px;text-align:right;transform:rotate(-50deg);transform-origin:100% 50%;font:400 25px/30px 'Liberation Sans',sans-serif;letter-spacing:-0.5px;color:#666;white-space:nowrap;">11AM</div>
<div style="position:absolute;left:1544.0px;top:391.5px;width:140px;height:30px;text-align:right;transform:rotate(-50deg);transform-origin:100% 50%;font:400 25px/30px 'Liberation Sans',sans-serif;letter-spacing:-0.5px;color:#666;white-space:nowrap;">1PM</div>
<div style="position:absolute;left:1593.2px;top:391.5px;width:140px;height:30px;text-align:right;transform:rotate(-50deg);transform-origin:100% 50%;font:400 25px/30px 'Liberation Sans',sans-serif;letter-spacing:-0.5px;color:#666;white-space:nowrap;">3PM</div>
<div style="position:absolute;left:1642.3px;top:391.5px;width:140px;height:30px;text-align:right;transform:rotate(-50deg);transform-origin:100% 50%;font:400 25px/30px 'Liberation Sans',sans-serif;letter-spacing:-0.5px;color:#666;white-space:nowrap;">5PM</div>
<div style="position:absolute;left:1691.5px;top:391.5px;width:140px;height:30px;text-align:right;transform:rotate(-50deg);transform-origin:100% 50%;font:400 25px/30px 'Liberation Sans',sans-serif;letter-spacing:-0.5px;color:#666;white-space:nowrap;">7PM</div>
<div style="position:absolute;left:1740.6px;top:391.5px;width:140px;height:30px;text-align:right;transform:rotate(-50deg);transform-origin:100% 50%;font:400 25px/30px 'Liberation Sans',sans-serif;letter-spacing:-0.5px;color:#666;white-space:nowrap;">9PM</div>
<div style="position:absolute;left:1789.8px;top:391.5px;width:140px;height:30px;text-align:right;transform:rotate(-50deg);transform-origin:100% 50%;font:400 25px/30px 'Liberation Sans',sans-serif;letter-spacing:-0.5px;color:#666;white-space:nowrap;">11PM</div>
<div style="position:absolute;left:1839.0px;top:391.5px;width:140px;height:30px;text-align:right;transform:rotate(-50deg);transform-origin:100% 50%;font:400 25px/30px 'Liberation Sans',sans-serif;letter-spacing:-0.5px;color:#666;white-space:nowrap;">1AM</div>
<div style="position:absolute;left:1888.1px;top:391.5px;width:140px;height:30px;text-align:right;transform:rotate(-50deg);transform-origin:100% 50%;font:400 25px/30px 'Liberation Sans',sans-serif;letter-spacing:-0.5px;color:#666;white-space:nowrap;">3AM</div>
<div style="position:absolute;left:1937.3px;top:391.5px;width:140px;height:30px;text-align:right;transform:rotate(-50deg);transform-origin:100% 50%;font:400 25px/30px 'Liberation Sans',sans-serif;letter-spacing:-0.5px;color:#666;white-space:nowrap;">5AM</div>
<div style="position:absolute;left:1986.4px;top:391.5px;width:140px;height:30px;text-align:right;transform:rotate(-50deg);transform-origin:100% 50%;font:400 25px/30px 'Liberation Sans',sans-serif;letter-spacing:-0.5px;color:#666;white-space:nowrap;">7AM</div>
<div style="position:absolute;left:2035.6px;top:391.5px;width:140px;height:30px;text-align:right;transform:rotate(-50deg);transform-origin:100% 50%;font:400 25px/30px 'Liberation Sans',sans-serif;letter-spacing:-0.5px;color:#666;white-space:nowrap;">9AM</div>
<div style="position:absolute;left:2084.8px;top:391.5px;width:140px;height:30px;text-align:right;transform:rotate(-50deg);transform-origin:100% 50%;font:400 25px/30px 'Liberation Sans',sans-serif;letter-spacing:-0.5px;color:#666;white-space:nowrap;">11AM</div>
<div style="position:absolute;left:2133.9px;top:391.5px;width:140px;height:30px;text-align:right;transform:rotate(-50deg);transform-origin:100% 50%;font:400 25px/30px 'Liberation Sans',sans-serif;letter-spacing:-0.5px;color:#666;white-space:nowrap;">1PM</div>
<div style="position:absolute;left:2183.1px;top:391.5px;width:140px;height:30px;text-align:right;transform:rotate(-50deg);transform-origin:100% 50%;font:400 25px/30px 'Liberation Sans',sans-serif;letter-spacing:-0.5px;color:#666;white-space:nowrap;">3PM</div>
<div style="position:absolute;left:2232.2px;top:391.5px;width:140px;height:30px;text-align:right;transform:rotate(-50deg);transform-origin:100% 50%;font:400 25px/30px 'Liberation Sans',sans-serif;letter-spacing:-0.5px;color:#666;white-space:nowrap;">5PM</div>
<div style="position:absolute;left:2281.4px;top:391.5px;width:140px;height:30px;text-align:right;transform:rotate(-50deg);transform-origin:100% 50%;font:400 25px/30px 'Liberation Sans',sans-serif;letter-spacing:-0.5px;color:#666;white-space:nowrap;">7PM</div>
<div style="position:absolute;left:2330.6px;top:391.5px;width:140px;height:30px;text-align:right;transform:rotate(-50deg);transform-origin:100% 50%;font:400 25px/30px 'Liberation Sans',sans-serif;letter-spacing:-0.5px;color:#666;white-space:nowrap;">9PM</div>
<div style="position:absolute;left:2379.7px;top:391.5px;width:140px;height:30px;text-align:right;transform:rotate(-50deg);transform-origin:100% 50%;font:400 25px/30px 'Liberation Sans',sans-serif;letter-spacing:-0.5px;color:#666;white-space:nowrap;">11PM</div>
<div style="position:absolute;left:2428.9px;top:391.5px;width:140px;height:30px;text-align:right;transform:rotate(-50deg);transform-origin:100% 50%;font:400 25px/30px 'Liberation Sans',sans-serif;letter-spacing:-0.5px;color:#666;white-space:nowrap;">1AM</div>
<div style="position:absolute;left:2478.0px;top:391.5px;width:140px;height:30px;text-align:right;transform:rotate(-50deg);transform-origin:100% 50%;font:400 25px/30px 'Liberation Sans',sans-serif;letter-spacing:-0.5px;color:#666;white-space:nowrap;">3AM</div>
<div style="position:absolute;left:2527.2px;top:391.5px;width:140px;height:30px;text-align:right;transform:rotate(-50deg);transform-origin:100% 50%;font:400 25px/30px 'Liberation Sans',sans-serif;letter-spacing:-0.5px;color:#666;white-space:nowrap;">5AM</div>
<div style="position:absolute;left:2576.4px;top:391.5px;width:140px;height:30px;text-align:right;transform:rotate(-50deg);transform-origin:100% 50%;font:400 25px/30px 'Liberation Sans',sans-serif;letter-spacing:-0.5px;color:#666;white-space:nowrap;">7AM</div>
<div style="position:absolute;left:2625.5px;top:391.5px;width:140px;height:30px;text-align:right;transform:rotate(-50deg);transform-origin:100% 50%;font:400 25px/30px 'Liberation Sans',sans-serif;letter-spacing:-0.5px;color:#666;white-space:nowrap;">9AM</div>
<div style="position:absolute;left:2674.7px;top:391.5px;width:140px;height:30px;text-align:right;transform:rotate(-50deg);transform-origin:100% 50%;font:400 25px/30px 'Liberation Sans',sans-serif;letter-spacing:-0.5px;color:#666;white-space:nowrap;">11AM</div>
<svg style="position:absolute;left:0;top:0" width="2866" height="420"><circle cx="563.6" cy="239.9" r="6.3" fill="#77d98b"/><circle cx="566" cy="246" r="6.3" fill="#77d98b"/><circle cx="566.6" cy="258.7" r="6.3" fill="#77d98b"/><circle cx="562.1" cy="264.8" r="6.3" fill="#77d98b"/><circle cx="563.8" cy="267" r="6.3" fill="#77d98b"/><circle cx="561" cy="288.4" r="6.3" fill="#77d98b"/><circle cx="562.1" cy="305.2" r="6.3" fill="#77d98b"/><circle cx="561" cy="314" r="6.3" fill="#77d98b"/><circle cx="568.2" cy="320.7" r="6.3" fill="#77d98b"/><circle cx="561" cy="330" r="6.3" fill="#77d98b"/><circle cx="568.2" cy="335" r="6.3" fill="#77d98b"/><circle cx="562.1" cy="344.5" r="6.3" fill="#77d98b"/><circle cx="567.7" cy="341.7" r="6.3" fill="#77d98b"/><circle cx="563.8" cy="350.6" r="6.3" fill="#77d98b"/><circle cx="567.7" cy="354.5" r="6.3" fill="#77d98b"/><circle cx="568" cy="326" r="6.3" fill="#77d98b"/><circle cx="568" cy="348" r="6.3" fill="#77d98b"/><circle cx="562" cy="322" r="6.3" fill="#77d98b"/><circle cx="565" cy="338" r="6.3" fill="#77d98b"/><circle cx="566" cy="330" r="6.3" fill="#77d98b"/><circle cx="565" cy="352" r="6.3" fill="#77d98b"/><circle cx="563" cy="356" r="6.3" fill="#77d98b"/><circle cx="625.2" cy="241.8" r="6.3" fill="#77d98b"/><circle cx="619.7" cy="251" r="6.3" fill="#77d98b"/><circle cx="625.2" cy="305.8" r="6.3" fill="#77d98b"/><circle cx="625.2" cy="311.3" r="6.3" fill="#77d98b"/><circle cx="625.8" cy="320.2" r="6.3" fill="#77d98b"/><circle cx="625.2" cy="326.8" r="6.3" fill="#77d98b"/><circle cx="625.8" cy="337.9" r="6.3" fill="#77d98b"/><circle cx="625.8" cy="344" r="6.3" fill="#77d98b"/><circle cx="625.8" cy="350.6" r="6.3" fill="#77d98b"/><circle cx="625.8" cy="357.2" r="6.3" fill="#77d98b"/><circle cx="625.5" cy="332" r="6.3" fill="#77d98b"/><circle cx="625.5" cy="347" r="6.3" fill="#77d98b"/><circle cx="656.2" cy="254.3" r="6.3" fill="#77d98b"/><circle cx="655.1" cy="261" r="6.3" fill="#77d98b"/><circle cx="657.3" cy="323.5" r="6.3" fill="#77d98b"/><circle cx="656.2" cy="329" r="6.3" fill="#77d98b"/><circle cx="657.3" cy="336.8" r="6.3" fill="#77d98b"/><circle cx="657.3" cy="334" r="6.3" fill="#77d98b"/><circle cx="725.6" cy="319.4" r="6.3" fill="#77d98b"/><circle cx="2323.8" cy="258.8" r="6.3" fill="#77d98b"/><circle cx="2323.8" cy="283" r="6.3" fill="#77d98b"/><circle cx="2323.8" cy="288" r="6.3" fill="#77d98b"/><circle cx="2323.8" cy="300.6" r="6.3" fill="#77d98b"/><circle cx="2323.8" cy="313" r="6.3" fill="#77d98b"/><circle cx="2323.8" cy="325" r="6.3" fill="#77d98b"/><circle cx="2323.8" cy="338" r="6.3" fill="#77d98b"/><circle cx="2323.8" cy="351" r="6.3" fill="#77d98b"/><circle cx="2323.8" cy="345" r="6.3" fill="#77d98b"/><circle cx="2323.8" cy="331" r="6.3" fill="#77d98b"/><circle cx="2323.8" cy="318" r="6.3" fill="#77d98b"/><circle cx="2323.8" cy="293.3" r="6.3" fill="#e57873"/><circle cx="2323.8" cy="304" r="6.3" fill="#e57873"/><circle cx="2323.8" cy="313.2" r="6.3" fill="#e57873"/><circle cx="2323.8" cy="325.8" r="6.3" fill="#e57873"/><circle cx="2323.8" cy="334.2" r="6.3" fill="#e57873"/><circle cx="2323.8" cy="341.2" r="6.3" fill="#e57873"/><circle cx="2323.8" cy="348.2" r="6.3" fill="#e57873"/><circle cx="2323.8" cy="330" r="6.3" fill="#e57873"/><circle cx="2323.8" cy="320" r="6.3" fill="#e57873"/><circle cx="2323.8" cy="308" r="6.3" fill="#e57873"/><circle cx="2522.7" cy="193.3" r="6.3" fill="#77d98b"/><circle cx="2522.7" cy="214.3" r="6.3" fill="#77d98b"/><circle cx="2522.7" cy="236" r="6.3" fill="#77d98b"/><circle cx="2522.7" cy="243" r="6.3" fill="#77d98b"/><circle cx="2517.8" cy="271" r="6.3" fill="#77d98b"/><circle cx="2517.8" cy="281" r="6.3" fill="#77d98b"/><circle cx="2517" cy="306" r="6.3" fill="#77d98b"/><circle cx="2517" cy="338.4" r="6.3" fill="#77d98b"/><circle cx="2523.4" cy="341.2" r="6.3" fill="#77d98b"/><circle cx="2523" cy="300" r="6.3" fill="#77d98b"/><circle cx="2524" cy="290" r="6.3" fill="#77d98b"/><circle cx="2523" cy="320" r="6.3" fill="#77d98b"/><circle cx="2522.7" cy="199.9" r="6.3" fill="#e57873"/><circle cx="2522.7" cy="251.5" r="6.3" fill="#e57873"/><circle cx="2522.7" cy="257" r="6.3" fill="#e57873"/><circle cx="2522.7" cy="264" r="6.3" fill="#e57873"/><circle cx="2522.7" cy="271" r="6.3" fill="#e57873"/><circle cx="2522" cy="278" r="6.3" fill="#e57873"/><circle cx="2517.8" cy="286.5" r="6.3" fill="#e57873"/><circle cx="2523" cy="288" r="6.3" fill="#e57873"/><circle cx="2522" cy="298" r="6.3" fill="#e57873"/><circle cx="2521" cy="308" r="6.3" fill="#e57873"/><circle cx="2522" cy="318" r="6.3" fill="#e57873"/><circle cx="2520" cy="326" r="6.3" fill="#e57873"/><circle cx="2522" cy="334" r="6.3" fill="#e57873"/><circle cx="2520" cy="330" r="6.3" fill="#e57873"/><circle cx="2523" cy="338" r="6.3" fill="#e57873"/><circle cx="2518" cy="314" r="6.3" fill="#e57873"/><circle cx="2518" cy="300" r="6.3" fill="#e57873"/><circle cx="2522.5" cy="251" r="6.3" fill="#e57873"/><circle cx="2522.5" cy="254" r="6.3" fill="#e57873"/><circle cx="2522.5" cy="257" r="6.3" fill="#e57873"/><circle cx="2522.5" cy="260" r="6.3" fill="#e57873"/><circle cx="2522.5" cy="263" r="6.3" fill="#e57873"/><circle cx="2522.5" cy="266" r="6.3" fill="#e57873"/><circle cx="2522.5" cy="269" r="6.3" fill="#e57873"/><circle cx="2522.5" cy="272" r="6.3" fill="#e57873"/><circle cx="2522.5" cy="275" r="6.3" fill="#e57873"/><circle cx="2522.5" cy="278" r="6.3" fill="#e57873"/><circle cx="2522.5" cy="281" r="6.3" fill="#e57873"/><circle cx="2522.5" cy="284" r="6.3" fill="#e57873"/><circle cx="2522.5" cy="287" r="6.3" fill="#e57873"/><circle cx="2522.5" cy="290" r="6.3" fill="#e57873"/><circle cx="2522.5" cy="293" r="6.3" fill="#e57873"/><circle cx="2522.5" cy="296" r="6.3" fill="#e57873"/><circle cx="2522.5" cy="299" r="6.3" fill="#e57873"/><circle cx="2522.5" cy="302" r="6.3" fill="#e57873"/><circle cx="2522.5" cy="305" r="6.3" fill="#e57873"/><circle cx="2522.5" cy="308" r="6.3" fill="#e57873"/><circle cx="2522.5" cy="311" r="6.3" fill="#e57873"/><circle cx="2522.5" cy="314" r="6.3" fill="#e57873"/><circle cx="2522.5" cy="317" r="6.3" fill="#e57873"/><circle cx="2522.5" cy="320" r="6.3" fill="#e57873"/><circle cx="2522.5" cy="323" r="6.3" fill="#e57873"/><circle cx="2522.5" cy="326" r="6.3" fill="#e57873"/><circle cx="2522.5" cy="329" r="6.3" fill="#e57873"/><circle cx="2522.5" cy="332" r="6.3" fill="#e57873"/><circle cx="2522.5" cy="335" r="6.3" fill="#e57873"/><circle cx="2519" cy="284" r="6.3" fill="#e57873"/><circle cx="2519" cy="288" r="6.3" fill="#e57873"/><circle cx="2519" cy="292" r="6.3" fill="#e57873"/><circle cx="2519" cy="296" r="6.3" fill="#e57873"/><circle cx="2519" cy="300" r="6.3" fill="#e57873"/><circle cx="2519" cy="304" r="6.3" fill="#e57873"/><circle cx="2519" cy="308" r="6.3" fill="#e57873"/><circle cx="2519" cy="312" r="6.3" fill="#e57873"/><circle cx="2519" cy="316" r="6.3" fill="#e57873"/><circle cx="2519" cy="320" r="6.3" fill="#e57873"/><circle cx="2519" cy="324" r="6.3" fill="#e57873"/><circle cx="2519" cy="328" r="6.3" fill="#e57873"/><circle cx="2519" cy="332" r="6.3" fill="#e57873"/><circle cx="2519" cy="336" r="6.3" fill="#e57873"/><circle cx="2517.5" cy="290" r="6.3" fill="#e57873"/></svg>
<div style="position:absolute;left:350.7px;letter-spacing:0.14px;top:489.8px;font: 400 25.57px/1 'Liberation Sans', sans-serif;color:#2d3748;white-space:pre;">Waiting for workers</div>
<svg style="position:absolute;left:582.0px;top:486.6px" width="26" height="26" viewBox="0 0 24 24" fill="none" stroke="#2d3748" stroke-width="1.9" stroke-linecap="round" stroke-linejoin="round" ><circle cx="12" cy="12" r="10"/><path d="M12 16v-4"/><path d="M12 8h.01"/></svg>
<div style="position:absolute;left:350.7px;top:533.6px;font: 400 33.43px/1 'Liberation Sans', sans-serif;color:#2d3748;white-space:pre;">0</div>
<div style="position:absolute;left:482px;top:528.8px;width:79.5px;height:60.4px;background:#6b7280;border-radius:10px;"></div>
<svg style="position:absolute;left:508.7px;top:545.6px" width="26" height="26" viewBox="0 0 24 24" fill="none" stroke="#ffffff" stroke-width="2" stroke-linecap="round" stroke-linejoin="round" ><path d="M18 6 6 18"/><path d="m6 6 12 12"/></svg>
<div style="position:absolute;left:570px;top:528.8px;width:282.5px;height:60.4px;background:#4ea257;border-radius:10px;"></div>
<svg style="position:absolute;left:595.0px;top:544.0px" width="30" height="30" viewBox="0 0 24 24" fill="none" stroke="#ffffff" stroke-width="1.8" stroke-linecap="round" stroke-linejoin="round" ><path d="M20 6 9 17l-5-5"/></svg>
<div style="position:absolute;left:641.5px;letter-spacing:-0.64px;top:545.3px;font: 700 26.14px/1 'Liberation Sans', sans-serif;color:#ffffff;white-space:pre;">Re-run 898 jobs</div>
<div style="position:absolute;left:876.0px;letter-spacing:-0.07px;top:489.8px;font: 400 25.57px/1 'Liberation Sans', sans-serif;color:#2d3748;white-space:pre;">Schedules</div>
<div style="position:absolute;left:877px;top:538.6px;width:56px;height:31.4px;background:#d1d5db;border-radius:16px;"></div>
<div style="position:absolute;left:880px;top:541.6px;width:25.4px;height:25.4px;background:#fff;border-radius:50%;"></div>
<svg style="position:absolute;left:949.0px;top:539.0px" width="32" height="32" viewBox="0 0 24 24" fill="none" stroke="#2d3748" stroke-width="2" stroke-linecap="round" stroke-linejoin="round" ><rect width="18" height="18" x="3" y="4" rx="2" ry="2"/><line x1="16" x2="16" y1="2" y2="6"/><line x1="8" x2="8" y1="2" y2="6"/><line x1="3" x2="21" y1="10" y2="10"/></svg>
<div style="position:absolute;left:1051.0px;letter-spacing:-0.09px;top:489.8px;font: 400 25.57px/1 'Liberation Sans', sans-serif;color:#2d3748;white-space:pre;">Planned later</div>
<div style="position:absolute;left:1053px;top:538.6px;width:56px;height:31.4px;background:#3d63e0;border-radius:16px;"></div>
<div style="position:absolute;left:1080.6px;top:541.6px;width:25.4px;height:25.4px;background:#fff;border-radius:50%;"></div>
<svg style="position:absolute;left:1124.5px;top:538.5px" width="33" height="33" viewBox="0 0 24 24" fill="none" stroke="#2d3748" stroke-width="2" stroke-linecap="round" stroke-linejoin="round" ><circle cx="12" cy="12" r="10"/><polyline points="12 6 12 12 16 14"/></svg>
<div style="position:absolute;left:1228.5px;letter-spacing:0.31px;top:489.5px;font: 400 25.14px/1 'Liberation Sans', sans-serif;color:#2d3748;white-space:pre;">Min datetime</div>
<div style="position:absolute;left:1229.7px;top:520px;width:428.7px;height:66px;background:#f3f4f6;border:2px solid #cdd1d8;border-radius:12px;box-shadow:0 1px 2px rgba(0,0,0,0.05);"></div>
<div style="position:absolute;left:1248px;top:530px;width:336px;height:46px;overflow:hidden;">
<div style="position:absolute;left:-1.0px;letter-spacing:-0.55px;top:6.8px;font: 400 31.00px/1 'Liberation Sans', sans-serif;color:#2d3748;white-space:pre;">zoom x axis to set min (dr</div>
</div>
<div style="position:absolute;left:1588.5px;top:528px;width:61.2px;height:49.6px;background:#fff;border:2px solid #eceef1;border-radius:10px;"></div>
<svg style="position:absolute;left:1604.0px;top:537.8px" width="30" height="30" viewBox="0 0 24 24" fill="none" stroke="#2d3748" stroke-width="2" stroke-linecap="round" stroke-linejoin="round" ><rect width="18" height="18" x="3" y="4" rx="2" ry="2"/><line x1="16" x2="16" y1="2" y2="6"/><line x1="8" x2="8" y1="2" y2="6"/><line x1="3" x2="21" y1="10" y2="10"/></svg>
<div style="position:absolute;left:1674.0px;letter-spacing:0.05px;top:489.5px;font: 400 25.14px/1 'Liberation Sans', sans-serif;color:#2d3748;white-space:pre;">Max</div>
<div style="position:absolute;left:1676px;top:520px;width:427px;height:66px;background:#f3f4f6;border:2px solid #cdd1d8;border-radius:12px;box-shadow:0 1px 2px rgba(0,0,0,0.05);"></div>
<div style="position:absolute;left:1692.4px;letter-spacing:-0.70px;top:536.8px;font: 400 31.00px/1 'Liberation Sans', sans-serif;color:#2d3748;white-space:pre;">zoom x axis to set max</div>
<div style="position:absolute;left:2033px;top:528px;width:61.6px;height:49.6px;background:#fff;border:2px solid #eceef1;border-radius:10px;"></div>
<svg style="position:absolute;left:2048.8px;top:537.8px" width="30" height="30" viewBox="0 0 24 24" fill="none" stroke="#2d3748" stroke-width="2" stroke-linecap="round" stroke-linejoin="round" ><rect width="18" height="18" x="3" y="4" rx="2" ry="2"/><line x1="16" x2="16" y1="2" y2="6"/><line x1="8" x2="8" y1="2" y2="6"/><line x1="3" x2="21" y1="10" y2="10"/></svg>
<div style="position:absolute;left:2120.6px;top:525.7px;width:116.4px;height:58px;background:#fff;border:2px solid #e5e7eb;border-radius:12px;"></div>
<div style="position:absolute;left:2146.5px;letter-spacing:-0.64px;transform:scaleX(0.9616);transform-origin:1.0px 0;top:542.3px;font: 700 25.57px/1 'Liberation Sans', sans-serif;color:#2d3748;white-space:pre;">Reset</div>
<div style="position:absolute;left:2255px;top:525.7px;width:345px;height:58px;background:#fff;border:2px solid #e5e7eb;border-radius:12px;"></div>
<div style="position:absolute;left:2519px;top:527.7px;width:2px;height:54px;background:#e5e7eb;"></div>
<svg style="position:absolute;left:2280.5px;top:541.5px" width="27" height="27" viewBox="0 0 24 24" fill="none" stroke="#2d3748" stroke-width="2" stroke-linecap="round" stroke-linejoin="round" ><path d="M3 12a9 9 0 0 1 9-9 9.75 9.75 0 0 1 6.74 2.74L21 8"/><path d="M21 3v5h-5"/><path d="M21 12a9 9 0 0 1-9 9 9.75 9.75 0 0 1-6.74-2.74L3 16"/><path d="M8 16H3v5"/></svg>
<div style="position:absolute;left:2323.0px;letter-spacing:-0.60px;top:542.3px;font: 700 25.57px/1 'Liberation Sans', sans-serif;color:#2d3748;white-space:pre;">Last 1000 runs</div>
<svg style="position:absolute;left:2540.7px;top:535.0px" width="38" height="38" viewBox="0 0 24 24" fill="none" stroke="#2d3748" stroke-width="1.9" stroke-linecap="round" stroke-linejoin="round" ><path d="m6 9 6 6 6-6"/></svg>
<div style="position:absolute;left:2617px;top:538.8px;width:55.6px;height:32.2px;background:#3d63e0;border-radius:16px;"></div>
<div style="position:absolute;left:2644px;top:541.8px;width:25.6px;height:26.2px;background:#fff;border-radius:50%;"></div>
<div style="position:absolute;left:2689.0px;letter-spacing:0.60px;top:542.3px;font: 400 25.57px/1 'Liberation Sans', sans-serif;color:#2d3748;white-space:pre;">Auto-refresh</div>
<div style="position:absolute;left:318px;top:622.75px;width:1020px;height:2px;background:#e3e5e8;"></div>
<div style="position:absolute;left:318px;top:624.75px;width:1009px;height:72.25px;background:#eff6ff;"></div>
<div style="position:absolute;left:350px;top:645px;width:35.5px;height:31px;background:#f3f6f9;border-radius:10px;box-shadow:0 1px 3px rgba(0,0,0,0.07), 0 0 1px rgba(0,0,0,0.05);"></div>
<svg style="position:absolute;left:350px;top:645px" width="36" height="31" viewBox="0 0 36 31"><path d="M10.9 17.6 L14.9 21.4 L25.2 11.4" stroke="#000" stroke-width="4.2" fill="none" stroke-linecap="round" stroke-linejoin="round"/></svg>
<div style="position:absolute;left:403.0px;letter-spacing:-0.59px;top:646.4px;font: 700 29.29px/1 'Liberation Sans', sans-serif;color:#2d3748;white-space:pre;">Select all</div>
<div style="position:absolute;left:318px;top:697px;width:1009px;height:66px;background:#f3f4f6;"></div>
<div style="position:absolute;left:318px;top:762.75px;width:1009px;height:2px;background:#e2e4e8;"></div>
<div style="position:absolute;left:334.0px;letter-spacing:0.63px;top:717.8px;font: 400 23.21px/1 'Liberation Sans', sans-serif;color:#2d3748;white-space:pre;">898 jobs</div>
<div style="position:absolute;left:847.0px;letter-spacing:-0.47px;top:715.8px;font: 700 25.00px/1 'Liberation Sans', sans-serif;color:#2d3748;white-space:pre;">Path</div>
<div style="position:absolute;left:1250px;top:700px;width:77px;height:60px;overflow:hidden;">
<div style="position:absolute;left:8.0px;top:15.8px;font: 700 25.00px/1 'Liberation Sans', sans-serif;color:#2d3748;white-space:pre;">Triggered by</div>
</div>
<div style="position:absolute;left:318px;top:764.75px;width:1009px;height:64.5px;background:#f3f4f6;"></div>
<div style="position:absolute;left:318px;top:828.5px;width:1009px;height:2px;background:#e2e4e8;"></div>
<div style="position:absolute;left:357.8px;letter-spacing:0.02px;top:783.8px;font: 700 25.00px/1 'Liberation Sans', sans-serif;color:#2d3748;white-space:pre;">March 31, 2025</div>
<div style="position:absolute;left:318px;top:849px;width:1009px;height:659px;background:#eff6ff;"></div>
<div style="position:absolute;left:327px;top:873.0px;width:36px;height:32px;background:#f3f5f8;border-radius:10px;box-shadow:0 1px 2px rgba(0,0,0,0.05);"></div>
<svg style="position:absolute;left:333px;top:877.8px" width="26" height="22" viewBox="0 0 26 22"><path d="M4.5 12 L10 17 L21 6" stroke="#000" stroke-width="4" fill="none" stroke-linecap="round" stroke-linejoin="round"/></svg>
<div style="position:absolute;left:379px;top:872.9px;width:52px;height:35.85px;background:#e1f8e5;border-radius:10px;"></div>
<svg style="position:absolute;left:391.0px;top:876.8px" width="28" height="28" viewBox="0 0 24 24" fill="none" stroke="#1f6b2e" stroke-width="2" stroke-linecap="round" stroke-linejoin="round" ><path d="M20 6 9 17l-5-5"/></svg>
<div style="position:absolute;left:423.9px;letter-spacing:0.19px;top:879.8px;font: 400 23.21px/1 'Liberation Sans', sans-serif;color:#6b7280;white-space:pre;">Started 31/03, 23:06 (Ran in 0.06s)</div>
<svg style="position:absolute;left:802.0px;top:876.8px" width="28" height="28" viewBox="0 0 24 24" fill="none" stroke="#e8782e" stroke-width="2" stroke-linecap="round" stroke-linejoin="round" ><path d="M5 22h14"/><path d="M5 2h14"/><path d="M17 22v-4.172a2 2 0 0 0-.586-1.414L12 12l-4.414 4.414A2 2 0 0 0 7 17.828V22"/><path d="M7 2v4.172a2 2 0 0 0 .586 1.414L12 12l4.414-4.414A2 2 0 0 0 17 6.172V2"/></svg>
<div style="position:absolute;left:847.0px;letter-spacing:-0.70px;transform:scaleX(0.9496);transform-origin:1.0px 0;top:876.6px;font: 700 26.86px/1 'Liberation Sans', sans-serif;color:#4a84e8;white-space:pre;">u/dm/alert_on_user_ban</div>
<div style="position:absolute;left:1136px;top:872.9px;width:52px;height:35.85px;background:#ffffff;border-radius:12px;"></div>
<svg style="position:absolute;left:1150.0px;top:879.3px" width="24" height="24" viewBox="0 0 24 24" fill="none" stroke="#2d3748" stroke-width="2.2" stroke-linecap="round" stroke-linejoin="round" ><path d="M3 6h18"/><path d="M7 12h10"/><path d="M10 18h4"/></svg>
<div style="position:absolute;left:1270.2px;letter-spacing:0.85px;top:878.8px;font: 400 25.00px/1 'Liberation Sans', sans-serif;color:#2d3748;white-space:pre;">dm</div>
<div style="position:absolute;left:1314px;top:872.9px;width:13px;height:35.85px;background:#ffffff;border-radius:12px 0 0 12px;"></div>
<div style="position:absolute;left:327px;top:957.05px;width:36px;height:32px;background:#f3f5f8;border-radius:10px;box-shadow:0 1px 2px rgba(0,0,0,0.05);"></div>
<svg style="position:absolute;left:333px;top:961.8px" width="26" height="22" viewBox="0 0 26 22"><path d="M4.5 12 L10 17 L21 6" stroke="#000" stroke-width="4" fill="none" stroke-linecap="round" stroke-linejoin="round"/></svg>
<div style="position:absolute;left:379px;top:956.9499999999999px;width:52px;height:35.85px;background:#e1f8e5;border-radius:10px;"></div>
<svg style="position:absolute;left:391.0px;top:960.8px" width="28" height="28" viewBox="0 0 24 24" fill="none" stroke="#1f6b2e" stroke-width="2" stroke-linecap="round" stroke-linejoin="round" ><path d="M20 6 9 17l-5-5"/></svg>
<div style="position:absolute;left:423.9px;letter-spacing:0.21px;top:963.8px;font: 400 23.21px/1 'Liberation Sans', sans-serif;color:#6b7280;white-space:pre;">Started 31/03, 23:06 (Ran in 0.059s)</div>
<svg style="position:absolute;left:815.0px;top:960.8px" width="28" height="28" viewBox="0 0 24 24" fill="none" stroke="#e8782e" stroke-width="2" stroke-linecap="round" stroke-linejoin="round" ><path d="M5 22h14"/><path d="M5 2h14"/><path d="M17 22v-4.172a2 2 0 0 0-.586-1.414L12 12l-4.414 4.414A2 2 0 0 0 7 17.828V22"/><path d="M7 2v4.172a2 2 0 0 0 .586 1.414L12 12l4.414-4.414A2 2 0 0 0 17 6.172V2"/></svg>
<div style="position:absolute;left:847.0px;letter-spacing:-0.70px;transform:scaleX(0.9496);transform-origin:1.0px 0;top:960.6px;font: 700 26.86px/1 'Liberation Sans', sans-serif;color:#4a84e8;white-space:pre;">u/dm/alert_on_user_ban</div>
<div style="position:absolute;left:1136px;top:956.9499999999999px;width:52px;height:35.85px;background:#ffffff;border-radius:12px;"></div>
<svg style="position:absolute;left:1150.0px;top:963.3px" width="24" height="24" viewBox="0 0 24 24" fill="none" stroke="#2d3748" stroke-width="2.2" stroke-linecap="round" stroke-linejoin="round" ><path d="M3 6h18"/><path d="M7 12h10"/><path d="M10 18h4"/></svg>
<div style="position:absolute;left:1270.2px;letter-spacing:0.85px;top:962.8px;font: 400 25.00px/1 'Liberation Sans', sans-serif;color:#2d3748;white-space:pre;">dm</div>
<div style="position:absolute;left:1314px;top:956.9499999999999px;width:13px;height:35.85px;background:#ffffff;border-radius:12px 0 0 12px;"></div>
<div style="position:absolute;left:327px;top:1041.1px;width:36px;height:32px;background:#f3f5f8;border-radius:10px;box-shadow:0 1px 2px rgba(0,0,0,0.05);"></div>
<svg style="position:absolute;left:333px;top:1045.9px" width="26" height="22" viewBox="0 0 26 22"><path d="M4.5 12 L10 17 L21 6" stroke="#000" stroke-width="4" fill="none" stroke-linecap="round" stroke-linejoin="round"/></svg>
<div style="position:absolute;left:379px;top:1041.0px;width:52px;height:35.85px;background:#fde2e2;border-radius:10px;"></div>
<svg style="position:absolute;left:391.0px;top:1044.9px" width="28" height="28" viewBox="0 0 24 24" fill="none" stroke="#9b1c1c" stroke-width="2" stroke-linecap="round" stroke-linejoin="round" ><path d="M18 6 6 18"/><path d="m6 6 12 12"/></svg>
<div style="position:absolute;left:423.9px;letter-spacing:0.21px;top:1047.9px;font: 400 23.21px/1 'Liberation Sans', sans-serif;color:#6b7280;white-space:pre;">Started 31/03, 23:06 (Ran in 0.048s)</div>
<svg style="position:absolute;left:815.0px;top:1044.9px" width="28" height="28" viewBox="0 0 24 24" fill="none" stroke="#e8782e" stroke-width="2" stroke-linecap="round" stroke-linejoin="round" ><path d="M5 22h14"/><path d="M5 2h14"/><path d="M17 22v-4.172a2 2 0 0 0-.586-1.414L12 12l-4.414 4.414A2 2 0 0 0 7 17.828V22"/><path d="M7 2v4.172a2 2 0 0 0 .586 1.414L12 12l4.414-4.414A2 2 0 0 0 17 6.172V2"/></svg>
<div style="position:absolute;left:847.0px;letter-spacing:-0.70px;transform:scaleX(0.9496);transform-origin:1.0px 0;top:1044.7px;font: 700 26.86px/1 'Liberation Sans', sans-serif;color:#4a84e8;white-space:pre;">u/dm/alert_on_user_ban</div>
<div style="position:absolute;left:1136px;top:1041.0px;width:52px;height:35.85px;background:#ffffff;border-radius:12px;"></div>
<svg style="position:absolute;left:1150.0px;top:1047.4px" width="24" height="24" viewBox="0 0 24 24" fill="none" stroke="#2d3748" stroke-width="2.2" stroke-linecap="round" stroke-linejoin="round" ><path d="M3 6h18"/><path d="M7 12h10"/><path d="M10 18h4"/></svg>
<div style="position:absolute;left:1270.2px;letter-spacing:0.85px;top:1046.8px;font: 400 25.00px/1 'Liberation Sans', sans-serif;color:#2d3748;white-space:pre;">dm</div>
<div style="position:absolute;left:1314px;top:1041.0px;width:13px;height:35.85px;background:#ffffff;border-radius:12px 0 0 12px;"></div>
<div style="position:absolute;left:327px;top:1125.1499999999999px;width:36px;height:32px;background:#f3f5f8;border-radius:10px;box-shadow:0 1px 2px rgba(0,0,0,0.05);"></div>
<svg style="position:absolute;left:333px;top:1130.0px" width="26" height="22" viewBox="0 0 26 22"><path d="M4.5 12 L10 17 L21 6" stroke="#000" stroke-width="4" fill="none" stroke-linecap="round" stroke-linejoin="round"/></svg>
<div style="position:absolute;left:379px;top:1125.05px;width:52px;height:35.85px;background:#fde2e2;border-radius:10px;"></div>
<svg style="position:absolute;left:391.0px;top:1129.0px" width="28" height="28" viewBox="0 0 24 24" fill="none" stroke="#9b1c1c" stroke-width="2" stroke-linecap="round" stroke-linejoin="round" ><path d="M18 6 6 18"/><path d="m6 6 12 12"/></svg>
<div style="position:absolute;left:423.9px;letter-spacing:0.21px;top:1131.9px;font: 400 23.21px/1 'Liberation Sans', sans-serif;color:#6b7280;white-space:pre;">Started 31/03, 23:06 (Ran in 0.046s)</div>
<svg style="position:absolute;left:815.0px;top:1129.0px" width="28" height="28" viewBox="0 0 24 24" fill="none" stroke="#e8782e" stroke-width="2" stroke-linecap="round" stroke-linejoin="round" ><path d="M5 22h14"/><path d="M5 2h14"/><path d="M17 22v-4.172a2 2 0 0 0-.586-1.414L12 12l-4.414 4.414A2 2 0 0 0 7 17.828V22"/><path d="M7 2v4.172a2 2 0 0 0 .586 1.414L12 12l4.414-4.414A2 2 0 0 0 17 6.172V2"/></svg>
<div style="position:absolute;left:847.0px;letter-spacing:-0.70px;transform:scaleX(0.9496);transform-origin:1.0px 0;top:1128.7px;font: 700 26.86px/1 'Liberation Sans', sans-serif;color:#4a84e8;white-space:pre;">u/dm/alert_on_user_ban</div>
<div style="position:absolute;left:1136px;top:1125.05px;width:52px;height:35.85px;background:#ffffff;border-radius:12px;"></div>
<svg style="position:absolute;left:1150.0px;top:1131.5px" width="24" height="24" viewBox="0 0 24 24" fill="none" stroke="#2d3748" stroke-width="2.2" stroke-linecap="round" stroke-linejoin="round" ><path d="M3 6h18"/><path d="M7 12h10"/><path d="M10 18h4"/></svg>
<div style="position:absolute;left:1270.2px;letter-spacing:0.85px;top:1130.9px;font: 400 25.00px/1 'Liberation Sans', sans-serif;color:#2d3748;white-space:pre;">dm</div>
<div style="position:absolute;left:1314px;top:1125.05px;width:13px;height:35.85px;background:#ffffff;border-radius:12px 0 0 12px;"></div>
<div style="position:absolute;left:327px;top:1209.1999999999998px;width:36px;height:32px;background:#f3f5f8;border-radius:10px;box-shadow:0 1px 2px rgba(0,0,0,0.05);"></div>
<svg style="position:absolute;left:333px;top:1214.0px" width="26" height="22" viewBox="0 0 26 22"><path d="M4.5 12 L10 17 L21 6" stroke="#000" stroke-width="4" fill="none" stroke-linecap="round" stroke-linejoin="round"/></svg>
<div style="position:absolute;left:379px;top:1209.1px;width:52px;height:35.85px;background:#e1f8e5;border-radius:10px;"></div>
<svg style="position:absolute;left:391.0px;top:1213.0px" width="28" height="28" viewBox="0 0 24 24" fill="none" stroke="#1f6b2e" stroke-width="2" stroke-linecap="round" stroke-linejoin="round" ><path d="M20 6 9 17l-5-5"/></svg>
<div style="position:absolute;left:423.9px;letter-spacing:0.21px;top:1216.0px;font: 400 23.21px/1 'Liberation Sans', sans-serif;color:#6b7280;white-space:pre;">Started 31/03, 23:06 (Ran in 0.059s)</div>
<svg style="position:absolute;left:815.0px;top:1213.0px" width="28" height="28" viewBox="0 0 24 24" fill="none" stroke="#e8782e" stroke-width="2" stroke-linecap="round" stroke-linejoin="round" ><path d="M5 22h14"/><path d="M5 2h14"/><path d="M17 22v-4.172a2 2 0 0 0-.586-1.414L12 12l-4.414 4.414A2 2 0 0 0 7 17.828V22"/><path d="M7 2v4.172a2 2 0 0 0 .586 1.414L12 12l4.414-4.414A2 2 0 0 0 17 6.172V2"/></svg>
<div style="position:absolute;left:847.0px;letter-spacing:-0.70px;transform:scaleX(0.9496);transform-origin:1.0px 0;top:1212.8px;font: 700 26.86px/1 'Liberation Sans', sans-serif;color:#4a84e8;white-space:pre;">u/dm/alert_on_user_ban</div>
<div style="position:absolute;left:1136px;top:1209.1px;width:52px;height:35.85px;background:#ffffff;border-radius:12px;"></div>
<svg style="position:absolute;left:1150.0px;top:1215.5px" width="24" height="24" viewBox="0 0 24 24" fill="none" stroke="#2d3748" stroke-width="2.2" stroke-linecap="round" stroke-linejoin="round" ><path d="M3 6h18"/><path d="M7 12h10"/><path d="M10 18h4"/></svg>
<div style="position:absolute;left:1270.2px;letter-spacing:0.85px;top:1214.9px;font: 400 25.00px/1 'Liberation Sans', sans-serif;color:#2d3748;white-space:pre;">dm</div>
<div style="position:absolute;left:1314px;top:1209.1px;width:13px;height:35.85px;background:#ffffff;border-radius:12px 0 0 12px;"></div>
<div style="position:absolute;left:327px;top:1293.25px;width:36px;height:32px;background:#f3f5f8;border-radius:10px;box-shadow:0 1px 2px rgba(0,0,0,0.05);"></div>
<svg style="position:absolute;left:333px;top:1298.1px" width="26" height="22" viewBox="0 0 26 22"><path d="M4.5 12 L10 17 L21 6" stroke="#000" stroke-width="4" fill="none" stroke-linecap="round" stroke-linejoin="round"/></svg>
<div style="position:absolute;left:379px;top:1293.15px;width:52px;height:35.85px;background:#e1f8e5;border-radius:10px;"></div>
<svg style="position:absolute;left:391.0px;top:1297.1px" width="28" height="28" viewBox="0 0 24 24" fill="none" stroke="#1f6b2e" stroke-width="2" stroke-linecap="round" stroke-linejoin="round" ><path d="M20 6 9 17l-5-5"/></svg>
<div style="position:absolute;left:423.9px;letter-spacing:0.21px;top:1300.0px;font: 400 23.21px/1 'Liberation Sans', sans-serif;color:#6b7280;white-space:pre;">Started 31/03, 23:06 (Ran in 0.059s)</div>
<svg style="position:absolute;left:815.0px;top:1297.1px" width="28" height="28" viewBox="0 0 24 24" fill="none" stroke="#e8782e" stroke-width="2" stroke-linecap="round" stroke-linejoin="round" ><path d="M5 22h14"/><path d="M5 2h14"/><path d="M17 22v-4.172a2 2 0 0 0-.586-1.414L12 12l-4.414 4.414A2 2 0 0 0 7 17.828V22"/><path d="M7 2v4.172a2 2 0 0 0 .586 1.414L12 12l4.414-4.414A2 2 0 0 0 17 6.172V2"/></svg>
<div style="position:absolute;left:847.0px;letter-spacing:-0.70px;transform:scaleX(0.9496);transform-origin:1.0px 0;top:1296.8px;font: 700 26.86px/1 'Liberation Sans', sans-serif;color:#4a84e8;white-space:pre;">u/dm/alert_on_user_ban</div>
<div style="position:absolute;left:1136px;top:1293.15px;width:52px;height:35.85px;background:#ffffff;border-radius:12px;"></div>
<svg style="position:absolute;left:1150.0px;top:1299.6px" width="24" height="24" viewBox="0 0 24 24" fill="none" stroke="#2d3748" stroke-width="2.2" stroke-linecap="round" stroke-linejoin="round" ><path d="M3 6h18"/><path d="M7 12h10"/><path d="M10 18h4"/></svg>
<div style="position:absolute;left:1270.2px;letter-spacing:0.85px;top:1299.0px;font: 400 25.00px/1 'Liberation Sans', sans-serif;color:#2d3748;white-space:pre;">dm</div>
<div style="position:absolute;left:1314px;top:1293.15px;width:13px;height:35.85px;background:#ffffff;border-radius:12px 0 0 12px;"></div>
<div style="position:absolute;left:327px;top:1377.2999999999997px;width:36px;height:32px;background:#f3f5f8;border-radius:10px;box-shadow:0 1px 2px rgba(0,0,0,0.05);"></div>
<svg style="position:absolute;left:333px;top:1382.1px" width="26" height="22" viewBox="0 0 26 22"><path d="M4.5 12 L10 17 L21 6" stroke="#000" stroke-width="4" fill="none" stroke-linecap="round" stroke-linejoin="round"/></svg>
<div style="position:absolute;left:379px;top:1377.1999999999998px;width:52px;height:35.85px;background:#fde2e2;border-radius:10px;"></div>
<svg style="position:absolute;left:391.0px;top:1381.1px" width="28" height="28" viewBox="0 0 24 24" fill="none" stroke="#9b1c1c" stroke-width="2" stroke-linecap="round" stroke-linejoin="round" ><path d="M18 6 6 18"/><path d="m6 6 12 12"/></svg>
<div style="position:absolute;left:423.9px;letter-spacing:0.21px;top:1384.1px;font: 400 23.21px/1 'Liberation Sans', sans-serif;color:#6b7280;white-space:pre;">Started 31/03, 23:06 (Ran in 0.046s)</div>
<svg style="position:absolute;left:815.0px;top:1381.1px" width="28" height="28" viewBox="0 0 24 24" fill="none" stroke="#e8782e" stroke-width="2" stroke-linecap="round" stroke-linejoin="round" ><path d="M5 22h14"/><path d="M5 2h14"/><path d="M17 22v-4.172a2 2 0 0 0-.586-1.414L12 12l-4.414 4.414A2 2 0 0 0 7 17.828V22"/><path d="M7 2v4.172a2 2 0 0 0 .586 1.414L12 12l4.414-4.414A2 2 0 0 0 17 6.172V2"/></svg>
<div style="position:absolute;left:847.0px;letter-spacing:-0.70px;transform:scaleX(0.9496);transform-origin:1.0px 0;top:1380.9px;font: 700 26.86px/1 'Liberation Sans', sans-serif;color:#4a84e8;white-space:pre;">u/dm/alert_on_user_ban</div>
<div style="position:absolute;left:1136px;top:1377.1999999999998px;width:52px;height:35.85px;background:#ffffff;border-radius:12px;"></div>
<svg style="position:absolute;left:1150.0px;top:1383.6px" width="24" height="24" viewBox="0 0 24 24" fill="none" stroke="#2d3748" stroke-width="2.2" stroke-linecap="round" stroke-linejoin="round" ><path d="M3 6h18"/><path d="M7 12h10"/><path d="M10 18h4"/></svg>
<div style="position:absolute;left:1270.2px;letter-spacing:0.85px;top:1383.0px;font: 400 25.00px/1 'Liberation Sans', sans-serif;color:#2d3748;white-space:pre;">dm</div>
<div style="position:absolute;left:1314px;top:1377.1999999999998px;width:13px;height:35.85px;background:#ffffff;border-radius:12px 0 0 12px;"></div>
<div style="position:absolute;left:327px;top:1461.35px;width:36px;height:32px;background:#f3f5f8;border-radius:10px;box-shadow:0 1px 2px rgba(0,0,0,0.05);"></div>
<svg style="position:absolute;left:333px;top:1466.2px" width="26" height="22" viewBox="0 0 26 22"><path d="M4.5 12 L10 17 L21 6" stroke="#000" stroke-width="4" fill="none" stroke-linecap="round" stroke-linejoin="round"/></svg>
<div style="position:absolute;left:379px;top:1461.25px;width:52px;height:35.85px;background:#e1f8e5;border-radius:10px;"></div>
<svg style="position:absolute;left:391.0px;top:1465.2px" width="28" height="28" viewBox="0 0 24 24" fill="none" stroke="#1f6b2e" stroke-width="2" stroke-linecap="round" stroke-linejoin="round" ><path d="M20 6 9 17l-5-5"/></svg>
<div style="position:absolute;left:423.9px;letter-spacing:0.16px;top:1468.1px;font: 400 23.21px/1 'Liberation Sans', sans-serif;color:#6b7280;white-space:pre;">Started 31/03, 23:06 (Ran in 0.057s)</div>
<svg style="position:absolute;left:812.0px;top:1465.2px" width="28" height="28" viewBox="0 0 24 24" fill="none" stroke="#e8782e" stroke-width="2" stroke-linecap="round" stroke-linejoin="round" ><path d="M5 22h14"/><path d="M5 2h14"/><path d="M17 22v-4.172a2 2 0 0 0-.586-1.414L12 12l-4.414 4.414A2 2 0 0 0 7 17.828V22"/><path d="M7 2v4.172a2 2 0 0 0 .586 1.414L12 12l4.414-4.414A2 2 0 0 0 17 6.172V2"/></svg>
<div style="position:absolute;left:847.0px;letter-spacing:-0.70px;transform:scaleX(0.9496);transform-origin:1.0px 0;top:1464.9px;font: 700 26.86px/1 'Liberation Sans', sans-serif;color:#4a84e8;white-space:pre;">u/dm/alert_on_user_ban</div>
<div style="position:absolute;left:1136px;top:1461.25px;width:52px;height:35.85px;background:#ffffff;border-radius:12px;"></div>
<svg style="position:absolute;left:1150.0px;top:1467.7px" width="24" height="24" viewBox="0 0 24 24" fill="none" stroke="#2d3748" stroke-width="2.2" stroke-linecap="round" stroke-linejoin="round" ><path d="M3 6h18"/><path d="M7 12h10"/><path d="M10 18h4"/></svg>
<div style="position:absolute;left:1270.2px;letter-spacing:0.85px;top:1467.1px;font: 400 25.00px/1 'Liberation Sans', sans-serif;color:#2d3748;white-space:pre;">dm</div>
<div style="position:absolute;left:1314px;top:1461.25px;width:13px;height:35.85px;background:#ffffff;border-radius:12px 0 0 12px;"></div>
<div style="position:absolute;left:1327px;top:624px;width:10px;height:875px;background:#a6abb3;border-radius:5px;"></div>
<div style="position:absolute;left:1337px;top:624px;width:2px;height:884px;background:#e3e5e8;"></div>
<div style="position:absolute;left:1339px;top:623.75px;width:1527px;height:2px;background:#e3e5e8;"></div>
<div style="position:absolute;left:2834px;top:721.25px;width:2px;height:766px;background:#e3e5e8;"></div>
<div style="position:absolute;left:1371.0px;letter-spacing:-0.37px;transform:scaleX(0.9709);transform-origin:1.0px 0;top:659.4px;font: 700 25.71px/1 'Liberation Sans', sans-serif;color:#2d3748;white-space:pre;">Batch re-run options</div>
<div style="position:absolute;left:1371.25px;top:721.25px;width:1464px;height:766px;border:2px solid #e3e5e8;border-right:none;"></div>
<div style="position:absolute;left:1373.25px;top:723.25px;width:403px;height:762px;background:#f3f4f6;"></div>
<div style="position:absolute;left:1776px;top:723.25px;width:2px;height:762px;background:#dfe1e5;"></div>
<div style="position:absolute;left:1397.0px;letter-spacing:-0.03px;top:750.9px;font: 700 23.93px/1 'Liberation Sans', sans-serif;color:#2d3748;white-space:pre;">Runnables</div>
<div style="position:absolute;left:1397.5px;top:795.5px;width:344.25px;height:60.75px;background:#dde8fb;border:2px solid #3b7ff0;border-radius:5px;"></div>
<div style="position:absolute;left:1415.2px;letter-spacing:0.11px;top:814.0px;font: 400 23.21px/1 'Liberation Sans', sans-serif;color:#2d3748;white-space:pre;">u/dm/alert_on_user_b...</div>
<div style="position:absolute;left:1666.5px;letter-spacing:0.51px;top:814.0px;font: 400 23.21px/1 'Liberation Sans', sans-serif;color:#9ca3af;white-space:pre;">(898)</div>
<div style="position:absolute;left:1802px;top:744.25px;width:87.5px;height:47.5px;background:#3b63e0;border-radius:24px;"></div>
<div style="position:absolute;left:1845.5px;top:747px;width:42px;height:42px;background:#fff;border-radius:50%;"></div>
<div style="position:absolute;left:1907.5px;letter-spacing:-0.44px;top:752.3px;font: 400 31.07px/1 'Liberation Sans', sans-serif;color:#2d3748;white-space:pre;">Always use latest version</div>
<div style="position:absolute;left:1849.2px;letter-spacing:0.15px;top:831.4px;font: 700 32.14px/1 'Liberation Sans', sans-serif;color:#2d3748;white-space:pre;">bannedAt</div>
<div style="position:absolute;left:2000.0px;top:831.4px;font: 400 32.14px/1 'Liberation Sans', sans-serif;color:#ef4444;white-space:pre;">*</div>
<div style="position:absolute;left:2031.2px;letter-spacing:-0.43px;transform:scaleX(0.9693);transform-origin:0.0px 0;top:834.6px;font:italic 400 27.86px/1 'Liberation Sans', sans-serif;color:#4a5568;white-space:pre;">date-time</div>
<svg style="position:absolute;left:2154.2px;top:834.8px" width="29" height="29" viewBox="0 0 24 24" fill="none" stroke="#475569" stroke-width="1.8" stroke-linecap="round" stroke-linejoin="round" ><circle cx="12" cy="12" r="10"/><path d="M12 16v-4"/><path d="M12 8h.01"/></svg>
<div style="position:absolute;left:2634px;top:824.2px;width:149.5px;height:63.6px;background:#f3f4f6;border-radius:14px;"></div>
<div style="position:absolute;left:2732px;top:828.3px;width:47.8px;height:55.5px;background:#fff;border-radius:12px;box-shadow:0 2px 4px rgba(0,0,0,0.1);"></div>
<div style="position:absolute;left:2650.7px;letter-spacing:-0.36px;transform:scaleX(0.9714);transform-origin:0.0px 0;top:843.9px;font: 700 23.57px/1 'Liberation Sans', sans-serif;color:#2d3748;white-space:pre;">Static</div>
<svg style="position:absolute;left:2743.0px;top:843.0px" width="26" height="26" viewBox="0 0 24 24" fill="none" stroke="#3b7ff0" stroke-width="1.8" stroke-linecap="round" stroke-linejoin="round" ><rect width="18" height="18" x="3" y="3" rx="2" ry="2"/><path d="M9 17c2 0 2.8-1 2.8-2.8V10c0-2 1-3.3 3.2-3"/><path d="M9 11.2h5.7"/></svg>
<div style="position:absolute;left:1834.5px;top:912.4px;width:949px;height:321px;background:#fffffd;border:2px solid #e3e5e8;"></div>
<div style="position:absolute;left:1836.5px;top:914.4px;width:45.5px;height:317px;background:#f6f7f9;"></div>
<div style="position:absolute;left:1882px;top:914.4px;width:898px;height:40.6px;border:3px solid #ededed;border-top-width:3.6px;border-right:none;"></div>
<div style="position:absolute;left:2752.5px;top:914.4px;width:1.2px;height:317px;background:#ececec;"></div>
<div style="position:absolute;left:2753px;top:914px;width:27px;height:3.7px;background:#444;"></div>
<div style="position:absolute;left:0;top:0;width:2780px;height:1508px;overflow:hidden">
<div style="position:absolute;left:1852.0px;top:920.5px;font: 400 31.00px/1 'Liberation Mono', monospace;color:#0b216f;white-space:pre;">1</div>
<div style="position:absolute;left:1883.0px;top:920.5px;font: 400 31.00px/1 'Liberation Mono', monospace;letter-spacing:-1.8px;color:#267f1c;white-space:pre;">// bannedAt does not exist on all versions of the script</div>
<div style="position:absolute;left:1852.0px;top:962.6px;font: 400 31.00px/1 'Liberation Mono', monospace;color:#999999;white-space:pre;">2</div>
<div style="position:absolute;left:1883.0px;top:962.6px;font: 400 31.00px/1 'Liberation Mono', monospace;letter-spacing:-1.8px;color:#0000ff;white-space:pre;">if </div>
<div style="position:absolute;left:1933.4px;top:962.6px;font: 400 31.00px/1 'Liberation Mono', monospace;letter-spacing:-1.8px;color:#0431fa;white-space:pre;">(</div>
<div style="position:absolute;left:1950.2px;top:962.6px;font: 400 31.00px/1 'Liberation Mono', monospace;letter-spacing:-1.8px;color:#a31515;white-space:pre;">&quot;bannedAt&quot;</div>
<div style="position:absolute;left:2118.2px;top:962.6px;font: 400 31.00px/1 'Liberation Mono', monospace;letter-spacing:-1.8px;color:#0000ff;white-space:pre;"> in </div>
<div style="position:absolute;left:2185.4px;top:962.6px;font: 400 31.00px/1 'Liberation Mono', monospace;letter-spacing:-1.8px;color:#000;white-space:pre;">job.input</div>
<div style="position:absolute;left:2336.6px;top:962.6px;font: 400 31.00px/1 'Liberation Mono', monospace;letter-spacing:-1.8px;color:#0431fa;white-space:pre;">)</div>
<div style="position:absolute;left:2353.4px;top:962.6px;font: 400 31.00px/1 'Liberation Mono', monospace;letter-spacing:-1.8px;color:#0431fa;white-space:pre;"> {</div>
<div style="position:absolute;left:1852.0px;top:1004.6px;font: 400 31.00px/1 'Liberation Mono', monospace;color:#999999;white-space:pre;">3</div>
<div style="position:absolute;left:1883.0px;top:1004.6px;font: 400 31.00px/1 'Liberation Mono', monospace;letter-spacing:-1.8px;color:#000;white-space:pre;">  job.input.bannedAt</div>
<div style="position:absolute;left:1852.0px;top:1046.6px;font: 400 31.00px/1 'Liberation Mono', monospace;color:#999999;white-space:pre;">4</div>
<div style="position:absolute;left:1883.0px;top:1046.6px;font: 400 31.00px/1 'Liberation Mono', monospace;letter-spacing:-1.8px;color:#0431fa;white-space:pre;">} </div>
<div style="position:absolute;left:1916.6px;top:1046.6px;font: 400 31.00px/1 'Liberation Mono', monospace;letter-spacing:-1.8px;color:#0000ff;white-space:pre;">else</div>
<div style="position:absolute;left:1983.8px;top:1046.6px;font: 400 31.00px/1 'Liberation Mono', monospace;letter-spacing:-1.8px;color:#0431fa;white-space:pre;"> {</div>
<div style="position:absolute;left:1852.0px;top:1088.7px;font: 400 31.00px/1 'Liberation Mono', monospace;color:#999999;white-space:pre;">5</div>
<div style="position:absolute;left:1883.0px;top:1088.7px;font: 400 31.00px/1 'Liberation Mono', monospace;letter-spacing:-1.8px;color:#000;white-space:pre;">  job.scheduled_for</div>
<div style="position:absolute;left:1852.0px;top:1130.7px;font: 400 31.00px/1 'Liberation Mono', monospace;color:#999999;white-space:pre;">6</div>
<div style="position:absolute;left:1883.0px;top:1130.7px;font: 400 31.00px/1 'Liberation Mono', monospace;letter-spacing:-1.8px;color:#0431fa;white-space:pre;">}</div>
<div style="position:absolute;left:1852.0px;top:1172.7px;font: 400 31.00px/1 'Liberation Mono', monospace;color:#999999;white-space:pre;">7</div>
</div>
<div style="position:absolute;left:1882px;top:998px;width:2px;height:41px;background:#d6d6d6"></div>
<div style="position:absolute;left:1882px;top:1082px;width:2px;height:41px;background:#d6d6d6"></div>
<div style="position:absolute;left:1849.8px;letter-spacing:0.27px;top:1321.5px;font: 700 32.14px/1 'Liberation Sans', sans-serif;color:#2d3748;white-space:pre;">username</div>
<div style="position:absolute;left:2004.7px;top:1321.5px;font: 400 32.14px/1 'Liberation Sans', sans-serif;color:#ef4444;white-space:pre;">*</div>
<div style="position:absolute;left:2036.0px;letter-spacing:-0.56px;transform:scaleX(0.9572);transform-origin:0.0px 0;top:1325.1px;font:italic 400 27.86px/1 'Liberation Sans', sans-serif;color:#4a5568;white-space:pre;">string</div>
<div style="position:absolute;left:2651.4px;top:1314.6px;width:132px;height:62.8px;background:#f3f4f6;border-radius:14px;"></div>
<div style="position:absolute;left:2732px;top:1318px;width:48px;height:56px;background:#fff;border-radius:12px;box-shadow:0 2px 4px rgba(0,0,0,0.1);"></div>
<div style="position:absolute;left:2671.6px;letter-spacing:1.10px;top:1333.3px;font: 400 27.86px/1 'Liberation Sans', sans-serif;color:#2d3748;white-space:pre;">${}</div>
<svg style="position:absolute;left:2743.0px;top:1333.0px" width="26" height="26" viewBox="0 0 24 24" fill="none" stroke="#3b7ff0" stroke-width="1.8" stroke-linecap="round" stroke-linejoin="round" ><rect width="18" height="18" x="3" y="3" rx="2" ry="2"/><path d="M9 17c2 0 2.8-1 2.8-2.8V10c0-2 1-3.3 3.2-3"/><path d="M9 11.2h5.7"/></svg>
<div style="position:absolute;left:1834.5px;top:1402.3px;width:949px;height:45.2px;background:#fffffd;border:2px solid #e3e5e8;"></div>
<div style="position:absolute;left:1836.5px;top:1404.3px;width:45.5px;height:41.2px;background:#f6f7f9;"></div>
<div style="position:absolute;left:1882px;top:1404.3px;width:898px;height:39px;border:3px solid #ededed;border-top-width:3.6px;border-right:none;"></div>
<div style="position:absolute;left:2752.5px;top:1404.3px;width:1.2px;height:41px;background:#ececec;"></div>
<div style="position:absolute;left:2753px;top:1404px;width:27px;height:3.7px;background:#444;"></div>
<div style="position:absolute;left:1852.0px;top:1410.2px;font: 400 31.00px/1 'Liberation Mono', monospace;color:#0b216f;white-space:pre;">1</div>
<div style="position:absolute;left:1880.5px;top:1410.2px;font: 400 31.00px/1 'Liberation Mono', monospace;letter-spacing:-1.8px;color:#a31515;white-space:pre;">&quot;@&quot;</div>
<div style="position:absolute;left:1930.9px;top:1410.2px;font: 400 31.00px/1 'Liberation Mono', monospace;letter-spacing:-1.8px;color:#000;white-space:pre;"> + job.input.username</div>
<div style="position:absolute;left:2824.3px;top:845px;width:9.7px;height:342px;background:#a3a8b0;border-radius:5px;"></div>
<div style="position:absolute;left:318px;top:0px;width:16px;height:1508px;background:linear-gradient(to right, rgba(0,0,0,0.065), rgba(0,0,0,0.015) 60%, rgba(0,0,0,0));"></div>
</div>
</body></html>
